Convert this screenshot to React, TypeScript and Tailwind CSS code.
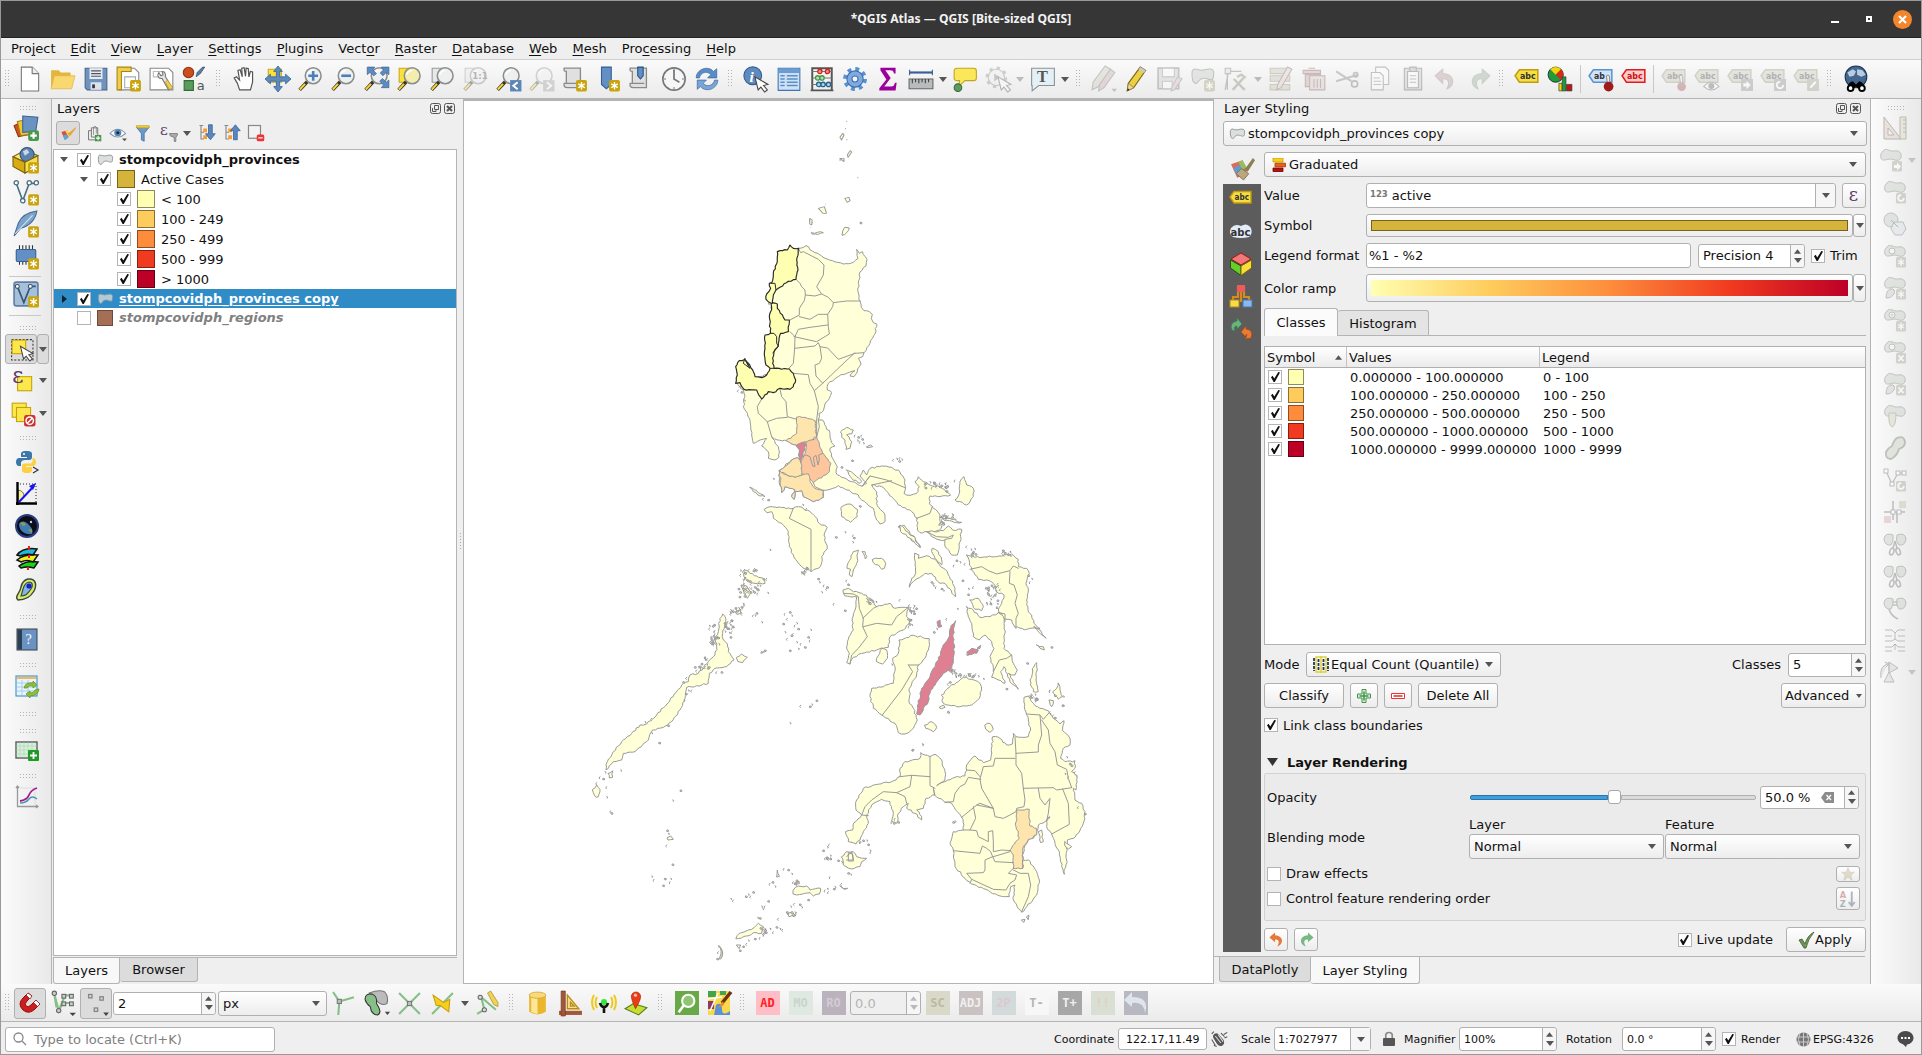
import React from "react";

type P = { children?: React.ReactNode };

const Ic = ({ children, s = 26, o = 1 }: P & { s?: number; o?: number }) => (
  <svg width={s} height={s} viewBox="0 0 24 24" fill="none" opacity={o} className="shrink-0 overflow-visible">
    {children}
  </svg>
);

const Tri = ({ c = "#555" }: { c?: string }) => (
  <svg width="8" height="5" viewBox="0 0 8 5" className="shrink-0"><path d="M0 0H8L4 5Z" fill={c} /></svg>
);
const TriUp = ({ c = "#555" }: { c?: string }) => (
  <svg width="7" height="5" viewBox="0 0 8 5" className="shrink-0"><path d="M0 5H8L4 0Z" fill={c} /></svg>
);

const Grip = () => (
  <svg width="7" height="18" viewBox="0 0 7 18" className="shrink-0">
    {[0, 3, 6, 9, 12, 15].map((y) => (
      <g key={y} fill="#b4b4b4"><rect x="0" y={y} width="1" height="1" /><rect x="3" y={y} width="1" height="1" /></g>
    ))}
  </svg>
);
const HGrip = () => (
  <svg width="17" height="4" viewBox="0 0 17 4" className="shrink-0">
    {[0, 3, 6, 9, 12, 15].map((x) => (
      <g key={x} fill="#b4b4b4"><rect x={x} y="0" width="1" height="1" /><rect x={x} y="3" width="1" height="1" /></g>
    ))}
  </svg>
);

const Check = ({ on = true }: { on?: boolean }) => (
  <span className="flex h-[14px] w-[14px] shrink-0 items-center justify-center border border-[#b4b4b4] bg-white">
    {on && (
      <svg width="11" height="12" viewBox="0 0 11 12"><path d="M1 6.2L2.6 4.8L4.3 7.6L8.3 1L10 1.6L4.8 11H3.6Z" fill="#111" /></svg>
    )}
  </span>
);

const Star = ({ x = 13, y = 13 }) => (
  <g>
    <rect x={x} y={y} width="10" height="10.5" rx="1.5" fill="#c9a40c" />
    <path d={`M${x + 5} ${y + 1.7}V${y + 8.8}M${x + 2} ${y + 3.5}L${x + 8} ${y + 7}M${x + 8} ${y + 3.5}L${x + 2} ${y + 7}`} stroke="#fff" strokeWidth="1.3" />
  </g>
);
const Lens = ({ fill = "#eef0f0" }) => (
  <g>
    <path d="M8.5 14.5L1.5 22" stroke="#3a3320" strokeWidth="3.2" />
    <path d="M6.5 16.5L1.7 21.7" stroke="#f5d73c" strokeWidth="1.8" />
    <circle cx="14" cy="9" r="7.3" fill={fill} stroke="#8b8d8d" strokeWidth="1.4" />
    <path d="M9 8Q10 4.5 14 4" stroke="#fff" strokeWidth="1.3" />
  </g>
);
const BLOB = "M2 5C3 2 5 2.500 8 3.500C12 5 15 2 20 3C23 4 22 8 21.500 11C21 14 18 12.500 15 11.500C11 10.500 9 12 7 15C6 17 3 16 2.500 13C2 11 1.500 8 2 5Z";
const Cursor = ({ x = 10, y = 9 }) => (
  <path transform={`translate(${x} ${y})`} d="M0 0L3 12L5.500 9.500L9 14L11.500 12L8 8L12 7Z" fill="#fff" stroke="#444" strokeWidth="1" />
);
const Scroll = () => (
  <path d="M2 2H17V20H5C2 20 1.500 18 2 16H4V5C2 5 1.500 4 2 2ZM4 16H15" fill="#e0e0e0" stroke="#8a8a8a" strokeWidth="1.2" />
);
const Tag = ({ f, s, t = "abc", c = "#333" }: { f: string; s: string; t?: string; c?: string }) => (
  <g>
    <path d="M1 9L5 3.500H22V15H5Z" fill={f} stroke={s} strokeWidth="1.400" />
    <text x="5.500" y="12" fontSize="8" fontWeight="bold" fill={c} fontFamily="DejaVu Sans, sans-serif" textLength={t === "abc" ? "14.500" : "10"} lengthAdjust="spacingAndGlyphs">{t}</text>
  </g>
);
const PENCIL = "M15 1L20 4L9 20L3 23L4 16Z";

const I = {
  newDoc: <Ic><path d="M4 1H14L20 7V23H4Z" fill="#fff" stroke="#777" /><path d="M14 1V7H20" fill="#eee" stroke="#777" /></Ic>,
  open: <Ic><path d="M1 4H8L10 6H19V20H1Z" fill="#e3b53c" /><path d="M4 9H23L20 21H1Z" fill="#f9d870" stroke="#e0b545" strokeWidth=".7" /></Ic>,
  save: <Ic><path d="M2 2H22V22H4L2 20Z" fill="#6f93bd" stroke="#47668c" /><path d="M6 2H18V12H6Z" fill="#e5eaf0" /><path d="M7.500 4.500H16.500M7.500 7H16.500M7.500 9.500H16.500" stroke="#556" /><path d="M7 15H17V22H7Z" fill="#dde3ea" /><path d="M8.500 17H11V20.500H8.500Z" fill="#334" /></Ic>,
  layoutNew: <Ic><path d="M3 2H17L21 6V22H3Z" fill="#fff" stroke="#888" /><path d="M1 1H14V5H5V22H1Z" fill="#f1cd4d" stroke="#a98516" /><path d="M8 10H18V20H8Z" stroke="#aaa" /><Star x={13} y={13} /></Ic>,
  layoutMgr: <Ic><path d="M1 2H18L22 6V22H1Z" fill="#fff" stroke="#888" /><path d="M4 5H14V10H4Z" stroke="#bbb" /><path d="M9 6C7 9 9 12 12 11.500L18 22L21 20L15 9.500C16 7 14 5 12 5L13 8L11 9Z" fill="#e4e4e4" stroke="#777" /><path d="M15 15L19 22L22 20L17 13Z" fill="#f0cf50" stroke="#a98516" strokeWidth=".6" /></Ic>,
  styles: <Ic><circle cx="6" cy="6" r="4.800" fill="#cc4e1e" stroke="#8f3210" /><path d="M21 1L17 7L13 10L14 6L19 1Z" fill="#557fae" stroke="#345" strokeWidth=".6" /><path d="M2 13.500H10.500V22.500H2Z" fill="#5b9b5e" stroke="#2f6d33" /><text x="13.500" y="22" fontSize="12" fill="#555" fontFamily="DejaVu Sans, sans-serif">a</text></Ic>,
  hand: <Ic><path d="M7 22L5 16L2 11L4 10L7 13L5.500 4L7.500 3.500L9.500 10L9 2L11.200 1.500L12.500 9.500L13 2L15 2.300L15.600 10L17 5L19 5.500L19 15L17 22Z" fill="#fff" stroke="#555" strokeWidth="1.100" /></Ic>,
  pan: <Ic><path d="M3 3H15V15H3Z" fill="#f9e23c" stroke="#c9a820" /><path d="M12 0L16 5H13.500V10H19V7.500L24 12L19 16.500V14H13.500V19H16L12 24L8 19H10.500V14H5V16.500L0 12L5 7.500V10H10.500V5H8Z" fill="#5d8abf" stroke="#355f93" strokeWidth=".7" /></Ic>,
  zin: <Ic><Lens /><path d="M14 4.500V13.500M9.500 9H18.500" stroke="#4d7fb8" strokeWidth="2.400" /></Ic>,
  zout: <Ic><Lens /><path d="M9.500 9H18.500" stroke="#4d7fb8" strokeWidth="2.400" /></Ic>,
  zfull: <Ic><Lens /><path d="M3 1H10L8 3.500L11.500 7L9 9L5.500 6L3 8ZM23 1V8L20.500 6L17.500 9L15 6.500L18 3.500L16 1ZM23 20H16L18 17.500L14.500 14L17 11.500L20.500 15L23 13Z" fill="#5d8abf" stroke="#355f93" strokeWidth=".6" /></Ic>,
  zsel: <Ic><path d="M2 2H12V15H2Z" fill="#f9e23c" stroke="#c9a820" /><Lens fill="#f3eeb0" /></Ic>,
  zlayer: <Ic><path d="M2 2H12V15H2Z" fill="#e8e8e8" stroke="#999" /><Lens /></Ic>,
  z11: <Ic o={0.4}><path d="M2 2H12V15H2Z" fill="#e8e8e8" stroke="#999" /><Lens /><text x="8.500" y="12" fontSize="8" fontWeight="bold" fill="#555" fontFamily="DejaVu Sans, sans-serif">1:1</text></Ic>,
  zlast: <Ic><Lens /><path d="M13 13H23.500V23.500H13Z" fill="#5d86b5" /><path d="M20 15L16 18.300L20 21.500" stroke="#fff" strokeWidth="1.800" /></Ic>,
  znext: <Ic o={0.35}><Lens /><path d="M13 13H23.500V23.500H13Z" fill="#999" /><path d="M16.500 15L20.500 18.300L16.500 21.500" stroke="#fff" strokeWidth="1.800" /></Ic>,
  mapNew: <Ic><Scroll /><Star /></Ic>,
  bmNew: <Ic><path d="M6 1H15V17L10.500 21L6 17Z" fill="#6290c4" stroke="#365f92" /><Star /></Ic>,
  bms: <Ic><Scroll /><path d="M9 1H14V9L11.500 12L9 9Z" fill="#6290c4" stroke="#264f80" /></Ic>,
  clock: <Ic><circle cx="12" cy="12" r="10.300" fill="#f6f6f6" stroke="#777" strokeWidth="1.500" /><path d="M12 4V12L17 15" stroke="#777" strokeWidth="1.600" /><path d="M12 3V4.500M12 19.500V21M3 12H4.500M19.500 12H21" stroke="#368" /></Ic>,
  refresh: <Ic><path d="M2 11C2 3 13 -1 18 5L21 2.500V11H12.500L15.500 8C12 4 6 6 5 11Z" fill="#5a8cc8" stroke="#336199" strokeWidth=".6" /><path d="M22 13C22 21 11 25 6 19L3 21.500V13H11.500L8.500 16C12 20 18 18 19 13Z" fill="#7aa5d6" stroke="#336199" strokeWidth=".6" /></Ic>,
  identify: <Ic><circle cx="9" cy="9" r="8.200" fill="#5d8abf" stroke="#355f93" /><text x="6" y="14.500" fontSize="14" fontStyle="italic" fontWeight="bold" fill="#fff" fontFamily="Liberation Serif, serif">i</text><Cursor x={11} y={10} /></Ic>,
  table: <Ic><path d="M2 2H22V22.500H2Z" fill="#cfe1f5" stroke="#3f76b5" /><path d="M2.500 2.500H21.500V6.500H2.500Z" fill="#6b9dd3" /><path d="M4 9H8M4 12H8M4 15H8M4 18H8M10 9H20M10 12H20M10 15H20M10 18H20" stroke="#5b8fc8" strokeWidth="1.400" /></Ic>,
  abacus: <Ic><path d="M3 22V2H21V22M1.500 22.500H22.500" stroke="#555" strokeWidth="1.800" /><path d="M3 5H21M3 11H21M3 17H21" stroke="#777" /><g strokeWidth="1.200"><circle cx="10" cy="5" r="2" fill="#f88" stroke="#c22" /><circle cx="17" cy="5" r="2" fill="#f88" stroke="#c22" /><circle cx="8" cy="11" r="2" fill="#bdb" stroke="#494" /><circle cx="12" cy="11" r="2" fill="#bdb" stroke="#494" /><circle cx="9" cy="17" r="2" fill="#bce" stroke="#268" /><circle cx="13" cy="17" r="2" fill="#bce" stroke="#268" /><circle cx="18" cy="17" r="2" fill="#bce" stroke="#268" /></g></Ic>,
  gear: <Ic><circle cx="12" cy="12" r="9" stroke="#5a8fd0" strokeWidth="4" strokeDasharray="3.500 3.570" /><circle cx="12" cy="12" r="7.500" fill="#7faadf" stroke="#3d6fb0" /><circle cx="12" cy="12" r="2.800" fill="#f4f4f4" stroke="#3d6fb0" /></Ic>,
  sigma: <Ic><path d="M5 1.500H19V7H17.500C17 4.500 16 4 14 4H9.500L14.500 11L8.500 19H15C17 19 17.500 18 18.500 15.500H20L19 22.500H4V20.500L10.500 12.500L5 4Z" fill="#9b009b" /></Ic>,
  measure: <Ic><path d="M1 6H23" stroke="#3a5f95" strokeWidth="2" /><path d="M1.500 3.500V8.500M22.500 3.500V8.500" stroke="#3a5f95" /><path d="M1 12H23V21H1Z" fill="#b9bcbc" stroke="#666" /><path d="M4 12V16M7 12V15M10 12V16M13 12V15M16 12V16M19 12V15" stroke="#444" /></Ic>,
  tip: <Ic><path d="M5 2H20Q22.500 2 22.500 4.500V11Q22.500 13.500 20 13.500H12L6 19L7 13.500H5Q2 13.500 2 11V4.500Q2 2 5 2Z" fill="#fae85a" stroke="#c3a420" /><circle cx="5.500" cy="20" r="3.500" fill="#5b9b5e" stroke="#386b3a" /></Ic>,
  action: <Ic o={0.35}><circle cx="10.500" cy="10.500" r="8.500" stroke="#888" strokeWidth="3" strokeDasharray="3 3.670" /><circle cx="10.500" cy="10.500" r="7.500" fill="#eee" stroke="#777" /><path d="M8.500 7L14 10.500L8.500 14Z" fill="#777" /><Cursor x={12} y={10} /></Ic>,
  textAnn: <Ic><path d="M1.500 2H22.500V18H8L2 23V18H1.500Z" fill="#e3f0f5" stroke="#8a9296" /><text x="6.500" y="15" fontSize="15" fontWeight="bold" fill="#555" fontFamily="Liberation Serif, serif">T</text></Ic>,
  pencils: <Ic o={0.38}><path d={PENCIL} transform="translate(-2 -1)" fill="#ccb" stroke="#777" /><path d="M18 3L22 6L12 20L7 23L8 17Z" fill="#caa" stroke="#777" /><path d="M19 21H24L21.500 24Z" fill="#777" /></Ic>,
  pencil: <Ic><path d={PENCIL} fill="#edd042" stroke="#7c6a1e" /><path d="M15 1L20 4L18.500 6.500L13.500 3.500Z" fill="#c9c9c9" /><path d="M4 16L9 20L3 23Z" fill="#eed7a0" stroke="#7c6a1e" strokeWidth=".6" /><path d="M3 23L3.500 20.500L5 22Z" fill="#222" /></Ic>,
  saveEd: <Ic o={0.38}><path d="M1 2H20V21H1Z" fill="#ccc" stroke="#777" strokeWidth="1.500" /><path d="M5 2H16V10H5ZM5 14H14V21H5Z" fill="#fff" stroke="#888" /><path d="M19 10L23 12L16 22L13 23L14 19Z" fill="#dbb" stroke="#888" /></Ic>,
  polyNew: <Ic o={0.45}><path d={BLOB} fill="#cdd1cd" stroke="#888" /><rect x="13" y="13" width="10" height="10.500" rx="1.500" fill="#b0af8e" /><path d="M18 14.500V22M15 16.500L21 20M21 16.500L15 20" stroke="#fff" strokeWidth="1.300" /></Ic>,
  vertex: <Ic o={0.38}><path d="M4 5L4 22M5 5H17M5 5L2 22" stroke="#777" strokeWidth="1.200" /><path d="M2 2H7V7H2Z" fill="#ddd" stroke="#777" /><path d="M9 22L19 11M10 12L20 22M13 10L17 8L21 11" stroke="#887" strokeWidth="2.200" /></Ic>,
  multi: <Ic o={0.42}><path d="M2 2H20V7H2ZM2 9H20V14H2ZM2 17H20V22H2Z" fill="#cccbb8" stroke="#998" /><path d="M18 1L22 3L12 20L8 22L9 17Z" fill="#ecc" stroke="#777" /></Ic>,
  trash: <Ic o={0.4}><path d="M2 4H18V7H2ZM7 2H13M4 8H18V19H4Z" fill="#caa" stroke="#866" /><path d="M8 9H22V22H8Z" fill="#dcc" stroke="#866" /><path d="M12 12V20M15 12V20M18 12V20" stroke="#866" /></Ic>,
  cut: <Ic o={0.4}><path d="M2 5L16 14M2 14L22 8" stroke="#888" strokeWidth="2" /><circle cx="19" cy="16.500" r="2.800" stroke="#777" strokeWidth="1.500" /><circle cx="20" cy="8" r="2" stroke="#777" strokeWidth="1.500" /></Ic>,
  copy: <Ic o={0.4}><path d="M8 1H17L20 4V17H8Z" fill="#fff" stroke="#777" /><path d="M4 6H12L15 9V22H4Z" fill="#fff" stroke="#777" /><path d="M6 11H12M6 14H13M6 17H13" stroke="#888" /></Ic>,
  paste: <Ic o={0.45}><path d="M4 2H20V22H4Z" fill="#ccc" stroke="#777" /><path d="M7 5H17V20H7Z" fill="#fff" stroke="#777" /><path d="M9 1H15V5H9Z" fill="#bbb" stroke="#777" /><path d="M9 9H15M9 12H15M9 15H15" stroke="#888" /></Ic>,
  undo: <Ic o={0.38}><path d="M9 3L2 9L9 16V12C14 11 16 15 13 21C20 18 21 8 9 7Z" fill="#b99" stroke="#988" /></Ic>,
  redo: <Ic o={0.38}><path d="M15 3L22 9L15 16V12C10 11 8 15 11 21C4 18 3 8 15 7Z" fill="#9a9" stroke="#898" /></Ic>,
  abcY: <Ic><Tag f="#f5df3f" s="#c29b12" /></Ic>,
  diagram: <Ic><circle cx="8" cy="8" r="7" fill="#1d9b3e" stroke="#222" strokeWidth=".8" /><path d="M8 8L3 3A7 7 0 0 1 13 3Z" fill="#f5d40c" /><path d="M8 8L13 3A7 7 0 0 1 13 13Z" fill="#d82a18" /><path d="M11 16H14V23H11Z" fill="#f5d40c" stroke="#333" strokeWidth=".6" /><path d="M14 10H17.500V23H14Z" fill="#1d9b3e" stroke="#333" strokeWidth=".6" /><path d="M18 17H23V23H18Z" fill="#c01515" stroke="#333" strokeWidth=".6" /></Ic>,
  abB: <Ic><Tag f="#cfe3fa" s="#5b91cf" t="ab" /><path d="M17 9Q20 7 20 12V16L18 17Z" fill="#eee" stroke="#777" strokeWidth=".8" /><circle cx="19" cy="19" r="4.500" fill="#a11a1a" /></Ic>,
  abR: <Ic><Tag f="#fcc" s="#e01b1b" c="#c11" /></Ic>,
  search: <Ic><circle cx="12" cy="10" r="10" fill="#44668f" stroke="#1d3552" /><path d="M4 6L9 3L12 5L10 9L6 10ZM13 3L18 4L21 8L17 10L13 8Z" fill="#b9cde0" /><path d="M4 22Q4 15 9 14L12 17L15 14Q20 15 20 22L14 21L12 19L10 21Z" fill="#000" /><circle cx="7" cy="20.500" r="2.600" fill="#fff" stroke="#000" strokeWidth="1.800" /><circle cx="17.500" cy="20.500" r="2.600" fill="#fff" stroke="#000" strokeWidth="1.800" /></Ic>,
};

const grayTag = (extra: React.ReactNode) => (
  <Ic o={0.42}><Tag f="#cfcfc0" s="#a3a38c" c="#555" />{extra}</Ic>
);
const Slot = ({ children }: P) => <div className="flex w-[33px] shrink-0 items-center justify-center">{children}</div>;
const Gap = ({ w, children }: P & { w: string }) => <div className={`flex shrink-0 items-center justify-center ${w}`}>{children}</div>;
const Sep = () => <span className="h-7 w-px bg-[#c8c8c8]" />;

const TopToolbar = () => (
  <div className="flex h-[39px] shrink-0 items-center border-b border-[#b4b4b4] bg-gradient-to-b from-[#fafafa] to-[#ebebeb] pl-[3px]">
    <Gap w="w-[9px]"><Grip /></Gap>
    {[I.newDoc, I.open, I.save, I.layoutNew, I.layoutMgr, I.styles].map((x, i) => <Slot key={i}>{x}</Slot>)}
    <Gap w="w-[17px]"><Grip /></Gap>
    {[I.hand, I.pan, I.zin, I.zout, I.zfull, I.zsel, I.zlayer, I.z11, I.zlast, I.znext, I.mapNew, I.bmNew, I.bms, I.clock, I.refresh].map((x, i) => <Slot key={i}>{x}</Slot>)}
    <Gap w="w-[16px]"><Grip /></Gap>
    {[I.identify, I.table, I.abacus, I.gear, I.sigma, I.measure].map((x, i) => <Slot key={i}>{x}</Slot>)}
    <Gap w="w-[11px]"><Tri /></Gap>
    <Slot>{I.tip}</Slot><Slot>{I.action}</Slot>
    <Gap w="w-[12px]"><Tri c="#bbb" /></Gap>
    <Slot>{I.textAnn}</Slot>
    <Gap w="w-[12px]"><Tri /></Gap>
    <Gap w="w-[16px]"><Grip /></Gap>
    {[I.pencils, I.pencil, I.saveEd, I.polyNew, I.vertex].map((x, i) => <Slot key={i}>{x}</Slot>)}
    <Gap w="w-[12px]"><Tri c="#bbb" /></Gap>
    {[I.multi, I.trash, I.cut, I.copy, I.paste, I.undo, I.redo].map((x, i) => <Slot key={i}>{x}</Slot>)}
    <Gap w="w-[15px]"><Grip /></Gap>
    <Slot>{I.abcY}</Slot><Slot>{I.diagram}</Slot>
    <Gap w="w-[8px]"><Sep /></Gap>
    <Slot>{I.abB}</Slot><Slot>{I.abR}</Slot>
    <Gap w="w-[7px]"><Sep /></Gap>
    <Slot>{grayTag(<><path d="M17 9Q20 7 20 12V16L18 17Z" fill="#eee" stroke="#777" /><circle cx="19" cy="19" r="4" fill="#a66" /></>)}</Slot>
    <Slot>{grayTag(<><path d="M9 19Q16 11 23 19Q16 25 9 19Z" fill="#fff" stroke="#777" /><circle cx="16" cy="18.500" r="2.800" fill="#777" /></>)}</Slot>
    <Slot>{grayTag(<><path d="M13 12H24V23H13Z" fill="#999" /><path d="M15 16H18V13.500L22 17.500L18 21.500V19H15Z" fill="#fff" /></>)}</Slot>
    <Slot>{grayTag(<><path d="M13 12H24V23H13Z" fill="#999" /><circle cx="18.500" cy="17.500" r="3" stroke="#fff" strokeWidth="1.800" strokeDasharray="14 5" /></>)}</Slot>
    <Slot>{grayTag(<><path d="M13 12H24V23H13Z" fill="#aa9" /><path d="M16 20L21 14.500" stroke="#fff" strokeWidth="2" /></>)}</Slot>
    <Gap w="w-[17px]"><Grip /></Gap>
    <Slot>{I.search}</Slot>
  </div>
);

const Cell = ({ h, children }: P & { h: string }) => <div className={`flex shrink-0 items-center ${h}`}>{children}</div>;
const SQ = ({ x, y, s = 14 }: { x: number; y: number; s?: number }) => <rect x={x} y={y} width={s} height={s} fill="#fce84d" stroke="#c7a109" />;

const LeftToolbar = () => (
  <div className="flex w-[51px] shrink-0 flex-col border-r border-[#b4b4b4] bg-gradient-to-r from-[#fbfbfb] to-[#e9e9e9]">
    <div className="flex flex-col pl-[12px]">
      <Cell h="h-[13px]"><span className="mt-1 ml-[7px]"><HGrip /></span></Cell>
      <Cell h="h-[32px]"><Ic><path d="M1 10L9 6L14 18L5 20Z" fill="#d4501c" stroke="#8d3212" /><path d="M4 6L14 4L16 18L7 19Z" fill="#ecc635" stroke="#9c7c12" /><path d="M9 1L23 2L21 15L9 16Z" fill="#6a93c4" stroke="#41648f" /><rect x="14" y="14" width="10" height="10" rx="2" fill="#4c9650" /><path d="M19 16V22M16 19H22" stroke="#fff" strokeWidth="2" /></Ic></Cell>
      <Cell h="h-[32px]"><Ic><path d="M0 9L11 3L23 8L11 14Z" fill="#fbe97c" stroke="#7a610e" /><circle cx="13" cy="7" r="6.500" fill="#5c83b0" stroke="#324f75" /><path d="M9 4L13 2L15 5L11 8Z" fill="#c8d8e8" /><path d="M0 9L11 14V24L0 18Z" fill="#d8ab14" stroke="#7a610e" /><path d="M11 14L23 8V18L11 24Z" fill="#f7df4d" stroke="#7a610e" /><Star x={14} y={14} /></Ic></Cell>
      <Cell h="h-[32px]"><Ic><path d="M3 4L9 20L15 4H22" stroke="#4a6e80" strokeWidth="1.500" /><g fill="#fff" stroke="#4a6e80" strokeWidth="1.200"><circle cx="3" cy="3.500" r="2" /><circle cx="15" cy="3.500" r="2" /><circle cx="21.500" cy="3.500" r="2" /><circle cx="9" cy="20" r="2" /></g><Star x={14} y={14} /></Ic></Cell>
      <Cell h="h-[32px]"><Ic><path d="M1 23L5 11C8 4 15 1 22 0C21 7 16 14 7 16Z" fill="#7ba3cc" stroke="#456a92" /><path d="M2 21L18 4" stroke="#dbe7f3" /><Star x={14} y={14} /></Ic></Cell>
      <Cell h="h-[32px]"><Ic><path d="M6 2V20M9 2V20M12 2V20M15 2V20M18 2V20" stroke="#333" /><rect x="3" y="6" width="18" height="11" rx="1" fill="#6290c4" stroke="#365f92" /><Star x={14} y={14} /></Ic></Cell>
      <Cell h="h-[8px]"><span className="h-px w-8 bg-[#c8c8c8] -ml-1" /></Cell>
      <Cell h="h-[28px]"><Ic><rect x="1" y="1" width="22" height="22" rx="2" fill="#a6c0dc" stroke="#5f7fa3" strokeWidth="1.500" /><path d="M4 5L10 20L16 5H21" stroke="#36546e" strokeWidth="1.500" /><circle cx="4" cy="5" r="1.800" fill="#fff" stroke="#36546e" /><circle cx="16" cy="5" r="1.800" fill="#fff" stroke="#36546e" /><Star x={14} y={14} /></Ic></Cell>
      <Cell h="h-[14px]"><span className="h-px w-8 bg-[#c8c8c8] -ml-1" /></Cell>
      <Cell h="h-[12px]"><span className="ml-[7px]"><HGrip /></span></Cell>
    </div>
    <div className="flex h-[30px] shrink-0 pl-1">
      <div className="flex w-8 items-center justify-center rounded-[3px] border border-[#b0b0b0] bg-[#dcdcdc]"><Ic s={25}><path d="M2.500 2.500H23V22H2.500Z" stroke="#333" strokeDasharray="2 1.500" /><SQ x={3} y={3} s={13} /><Cursor x={11} y={9} /></Ic></div>
      <div className="flex w-[12px] items-center justify-center rounded-[3px] border border-[#b0b0b0] bg-[#dcdcdc]"><Tri /></div>
    </div>
    <div className="flex h-[33px] shrink-0 items-center pl-[9px]"><Ic><SQ x={7} y={8} s={13} /><text x="2" y="14" fontSize="20" fill="#5b3a6e" fontFamily="DejaVu Serif, serif">ε</text></Ic><span className="ml-[3px]"><Tri /></span></div>
    <div className="flex h-[33px] shrink-0 items-center pl-[9px]"><Ic><SQ x={2} y={2} s={13} /><SQ x={6} y={6} s={13} /><rect x="13" y="13" width="10.500" height="10.500" rx="2" fill="#cf3030" /><circle cx="18.200" cy="18.200" r="3.400" stroke="#fff" strokeWidth="1.400" /><path d="M16 20.500L20.500 16" stroke="#fff" strokeWidth="1.300" /></Ic><span className="ml-[3px]"><Tri /></span></div>
    <div className="flex flex-col pl-[14px]">
      <Cell h="h-[16px]"><span className="ml-[5px]"><HGrip /></span></Cell>
      <Cell h="h-[32px]"><Ic s={24}><path d="M11 1C6 1 6 3 6 5V7H12V8H4C0 8 0 16 4 16H6V13C6 11 8 10 10 10H14C16 10 17 9 17 7V4C17 1 14 1 11 1Z" fill="#3b77a8" /><path d="M12 23C17 23 17 21 17 19V17H11V16H18C22 16 22 8 18 8H17.500V11C17.500 13 16 13.500 14 13.500H10C7 13.500 7 15 7 17V20C7 23 9 23 12 23Z" fill="#fdd043" /><circle cx="9" cy="4" r="1" fill="#fff" /><path d="M18 17L23 20L18 23" stroke="#333" strokeWidth="1.200" /></Ic></Cell>
      <Cell h="h-[32px]"><Ic s={24}><path d="M3 21L3 8Q9 9 9 14Z" fill="#f7f29a" stroke="#222" strokeWidth=".6" /><path d="M2.500 0V23M1 21.500H22" stroke="#000" strokeWidth="2.400" /><path d="M5 2H21V20" stroke="#222" strokeDasharray="1 2" /><path d="M4 20L19 4" stroke="#1616f0" strokeWidth="2" /><path d="M21 1L14 4L18 8Z" fill="#1616f0" /></Ic></Cell>
      <Cell h="h-[32px]"><Ic s={24}><circle cx="12" cy="12" r="11" fill="#0c0d18" stroke="#2a3f80" strokeWidth="2" /><path d="M4 10C6 6 11 7 14 11C18 15 18 18 17 20C10 21 4 17 4 10Z" fill="#417bb5" /><path d="M5 9L9 8L11 11L8 12ZM13 16L17 15L17 19Z" fill="#8f9a52" /><circle cx="16" cy="8" r="1.200" fill="#ccc" /></Ic></Cell>
      <Cell h="h-[32px]"><Ic s={24}><g stroke="#111" strokeWidth="1.500"><path d="M4 20Q12 14 23 16L19 22Q12 20 6 22Z" fill="#17d517" /><path d="M2 14Q9 8 23 9L18 16Q12 13 6 16Z" fill="#f2ef22" /><path d="M2 9Q8 1 22 3L18 9Q12 7 5 10Z" fill="#23b8d8" /></g><path d="M14 0V4M14 9V12M13 21V24" stroke="#f01c1c" strokeWidth="2" /></Ic></Cell>
      <Cell h="h-[32px]"><Ic s={24}><path d="M13 1C21 0 22 7 19 13C15 20 10 22 3 22C-1 18 5 16 6 9C7 4 9 2 13 1Z" fill="#dcec62" stroke="#3b4a3f" strokeWidth="1.500" /><path d="M14 4C18 4 18 8 16 11C12 17 10 18 6 18C8 13 8 5 14 4Z" fill="#83b3ea" stroke="#3b4a3f" strokeWidth="1.200" /><circle cx="14" cy="8" r="2.600" fill="#1523b8" /></Ic></Cell>
      <Cell h="h-[22px]"><span className="ml-[5px]"><HGrip /></span></Cell>
      <Cell h="h-[21px]"><Ic s={24}><rect x="2" y="2" width="20" height="21" fill="#6a93c4" stroke="#3a3f4a" /><path d="M2.500 2.500H7V22.500H2.500Z" fill="#2c3f4f" /><text x="10.500" y="17" fontSize="14" fill="#fff" fontFamily="Liberation Serif, serif">?</text></Ic></Cell>
      <Cell h="h-[32px]"><span className="ml-[5px]"><HGrip /></span></Cell>
      <Cell h="h-[10px]"><Ic s={24}><rect x="1" y="2" width="21" height="20" fill="#eaf3fb" stroke="#4a9ac8" strokeWidth="1.200" /><path d="M2 3H21V5H2Z" fill="#f6b65c" /><path d="M2 9H21M2 13H21M2 17H21M7 6V21M13 6V21" stroke="#a7cfe9" /><path d="M9 14Q10 8 18 9V7L22 11L18 14V12Q14 11 12 14Z" fill="#8cc03c" stroke="#5d8f17" strokeWidth=".7" /><path d="M24 15Q23 22 15 22V24L11 20L15 17V19Q19 19 20 16Z" fill="#8cc03c" stroke="#5d8f17" strokeWidth=".7" /></Ic></Cell>
      <Cell h="h-[46px]"><span className="ml-[5px]"><HGrip /></span></Cell>
      <Cell h="h-[0px]"><span className="-mt-3 ml-[5px]"><HGrip /></span></Cell>
      <Cell h="h-[25px]"><Ic s={24}><path d="M1 4H22V20H1Z" fill="#d7efdc" stroke="#666" strokeWidth="1.500" /><path d="M5 4V20M9 4V20M13 4V20M17 4V20M1 8H22M1 12H22M1 16H22" stroke="#a8d3b2" strokeWidth=".6" /><rect x="13" y="12" width="11" height="11" rx="1" fill="#1f9a24" /><path d="M18.500 14V21M15 17.500H22" stroke="#fff" strokeWidth="1.800" /></Ic></Cell>
      <Cell h="h-[27px]"><span className="ml-[5px]"><HGrip /></span></Cell>
      <Cell h="h-[16px]"><Ic s={24}><path d="M5 3H20V20" stroke="#ddd" /><path d="M2.500 1V21.500H23M1 3L2.500 1L4 3M21 20L23 21.500L21 23" stroke="#999" strokeWidth="1.300" /><path d="M5 16Q12 15 14 10T22 3" stroke="#a8188c" strokeWidth="1.800" /><path d="M5 18Q11 18 14 14T22 14" stroke="#4a9ab0" strokeWidth="1.500" /></Ic></Cell>
    </div>
  </div>
);

const Blob = ({ o = 1 }: { o?: number }) => (
  <svg width="17" height="15" viewBox="0 0 24 18" fill="none" opacity={o} className="shrink-0"><path d={BLOB} fill="#dcdfdf" stroke="#999" strokeWidth="1.400" /></svg>
);

const PanelTitle = ({ t }: { t: string }) => (
  <div className="flex h-[18px] shrink-0 items-center justify-between">
    <span>{t}</span>
    <span className="flex gap-[3px]">
      <svg width="11" height="11" viewBox="0 0 11 11" fill="none" stroke="#555"><rect x=".5" y=".5" width="10" height="10" rx="2" /><path d="M4.500 2.500H8.500V6.500H4.500ZM2.500 5V8.500H6V6.500" /></svg>
      <svg width="11" height="11" viewBox="0 0 11 11" fill="none" stroke="#555"><rect x=".5" y=".5" width="10" height="10" rx="2" /><path d="M3 3L8 8M8 3L3 8" strokeWidth="2" /></svg>
    </span>
  </div>
);

const RAMP: [string, string, string][] = [
  ["< 100", "bg-[#ffffb2]", "border-[#8c8c60]"],
  ["100 - 249", "bg-[#fecc5c]", "border-[#8c7032]"],
  ["250 - 499", "bg-[#fd8d3c]", "border-[#8b4d21]"],
  ["500 - 999", "bg-[#f03b20]", "border-[#842011]"],
  ["> 1000", "bg-[#bd0026]", "border-[#680015]"],
];

const LayersPanel = () => (
  <div className="ml-px flex w-[405px] shrink-0 flex-col">
    <div className="pl-[4px] pr-[3px]"><PanelTitle t="Layers" /></div>
    <div className="mt-[4px] flex h-[24px] items-center pl-[3px]">
      <span className="flex h-6 w-6 items-center justify-center rounded-[3px] border border-[#b0b0b0] bg-[#dcdcdc]"><Ic s={17}><path d="M2 10L8 8L13 16L7 21Z" fill="#de4b3a" /><path d="M4 15L9 13L12 18L7 21Z" fill="#59a7dd" /><path d="M7 8L10 7L15 14L12 17Z" fill="#f3d44d" /><path d="M11 12L15 9L22 3L23 4L17 12L14 16Z" fill="#e8a33f" /></Ic></span>
      <span className="ml-[5px] flex items-center">
        <Ic s={17}><path d="M5 8V21H15M9 4V17H18V4ZM5 8H9" stroke="#777" strokeWidth="1.400" /><path d="M12 14V3Q14 0 16 3V12" stroke="#777" /><rect x="14" y="14" width="9" height="9" fill="#4c9650" /><path d="M18.500 15.500V21.500M15.500 18.500H21.500" stroke="#fff" strokeWidth="1.600" /></Ic>
        <span className="w-[8px]" />
        <Ic s={17}><path d="M0 12Q11 0 22 12Q11 22 0 12Z" fill="#fff" stroke="#8a9aab" strokeWidth="1.500" /><circle cx="11" cy="11" r="5" fill="#5684b8" /><circle cx="11" cy="11" r="2" fill="#123" /><path d="M17 19H24L20.500 23Z" fill="#555" /></Ic>
        <span className="w-[8px]" />
        <Ic s={17}><path d="M2 3H20L13 12V23L9 21V12Z" fill="#6d97c8" stroke="#3e68a0" /><path d="M2 1H20V4H2Z" fill="#f2d844" stroke="#b99c1d" /></Ic>
        <span className="w-[8px]" />
        <Ic s={19}><text x="0" y="14" fontSize="19" fill="#5b3a6e" fontFamily="DejaVu Serif, serif">ε</text><path d="M12 12H22V14L20 17V22H18V17L13 15Z" fill="#aaa" stroke="#777" /></Ic>
        <span className="w-[4px]" />
        <Tri />
        <span className="w-[7px]" />
        <Ic s={18}><path d="M2 2H7M4 2V20H8M4 11H8" stroke="#888" strokeWidth="1.500" /><path d="M7 6H12V11H7ZM7 15H12V20H7Z" fill="#fb9b2b" /><path d="M14 1H19V13H23L16.500 21L10 13H14Z" fill="#5a87be" stroke="#315e94" /></Ic>
        <span className="w-[7px]" />
        <Ic s={18}><path d="M2 2H7M4 2V20H8M4 11H8" stroke="#888" strokeWidth="1.500" /><path d="M7 6H12V11H7ZM7 15H12V20H7Z" fill="#fb9b2b" /><path d="M14 21H19V9H23L16.500 1L10 9H14Z" fill="#5a87be" stroke="#315e94" /></Ic>
        <span className="w-[6px]" />
        <Ic s={18}><rect x="2" y="2" width="16" height="17" stroke="#888" strokeWidth="1.600" fill="#f3f3f3" /><rect x="13" y="14" width="10" height="9" rx="2" fill="#e33" /><path d="M15 18.500H21" stroke="#fff" strokeWidth="1.600" /></Ic>
      </span>
    </div>
    <div className="mt-[4px] flex h-[807px] w-[404px] flex-col border border-[#b4b4b4] bg-white">
      <div className="flex h-[19px] items-center pl-[6px] font-bold"><Tri /><span className="ml-[9px]"><Check /></span><span className="ml-[6px]"><Blob /></span><span className="ml-[5px]">stompcovidph_provinces</span></div>
      <div className="flex h-5 items-center pl-[26px]"><Tri /><span className="ml-[9px]"><Check /></span><span className="ml-[6px] h-[18px] w-[18px] border border-[#74631d] bg-[#d4b43a]" /><span className="ml-[6px]">Active Cases</span></div>
      {RAMP.map(([t, bg, bd]) => (
        <div key={t} className="flex h-5 items-center pl-[63px]"><Check /><span className={`ml-[6px] h-[18px] w-[18px] border ${bg} ${bd}`} /><span className="ml-[6px]">{t}</span></div>
      ))}
      <div className="flex h-[19px] items-center bg-[#308cc6] pl-[8px] font-bold text-white"><svg width="5" height="8" viewBox="0 0 5 8"><path d="M0 0L5 4L0 8Z" fill="#123" /></svg><span className="ml-[10px] text-black"><Check /></span><span className="ml-[6px]"><Blob o={0.75} /></span><span className="ml-[5px] underline underline-offset-2">stompcovidph_provinces copy</span></div>
      <div className="flex h-[19px] items-center pl-[23px] font-bold italic text-[#808080]"><Check on={false} /><span className="ml-[6px] h-4 w-4 border border-[#6c4938] bg-[#a56f56]" /><span className="ml-[6px]">stompcovidph_regions</span></div>
    </div>
    <div className="mt-px flex h-[27px] w-[404px] items-start border-t border-[#b4b4b4]">
      <span className="flex h-[26px] w-[67px] items-center justify-center rounded-b-[3px] border border-t-0 border-[#b4b4b4] bg-[#f8f8f8]">Layers</span>
      <span className="flex h-[24px] w-[78px] items-center justify-center rounded-b-[3px] border border-t-0 border-l-0 border-[#b4b4b4] bg-[#dcdcdc]">Browser</span>
    </div>
  </div>
);

const Y = "#ffffd8";
type Shape = [string, string?];

const noise = (n: number) => {
  const v = Math.sin(n * 12.9898) * 43758.5453;
  return (v - Math.floor(v)) * 2 - 1;
};

// Adds small irregular steps between the vertices of a coastline made of straight segments.
const rough = (d: string, amp: number) => {
  if (/[QHVC]/.test(d)) return d;
  const pts = d.replace("Z", "").split(/[ML]/).filter(Boolean).map((p) => p.trim().split(" ").map(Number));
  const out: string[] = [];
  pts.forEach(([x, y], i) => {
    const [nx, ny] = pts[(i + 1) % pts.length];
    out.push(`${x} ${y}`);
    const len = Math.hypot(nx - x, ny - y);
    const n = Math.min(12, Math.floor(len / 7));
    for (let k = 1; k < n; k++) {
      const t = k / n;
      const o = noise(x * 0.7 + y * 1.3 + k) * amp;
      out.push(`${(x + (nx - x) * t - ((ny - y) / len) * o).toFixed(1)} ${(y + (ny - y) * t + ((nx - x) / len) * o).toFixed(1)}`);
    }
  });
  return `M${out.join("L")}Z`;
};

const G = ({ x, y, shapes, lines, dots }: { x: number; y: number; shapes: Shape[]; lines: string; dots: number[][] }) => (
  <g transform={`translate(${x} ${y}) scale(.33333)`} strokeLinejoin="round" strokeLinecap="round">
    {shapes.map(([d, f], i) => <path key={i} d={rough(d, 2.6)} fill={f ?? Y} stroke="#999" strokeWidth="3" />)}
    <path d={lines} fill="none" stroke="#999" strokeWidth="3" />
    {dots.map(([a, b], i) => <path key={i} d={i % 3 === 0 ? `M${a} ${b}l4 1l-1 4l-4 -1z` : i % 3 === 1 ? `M${a} ${b}l3 1l-1 3` : `M${a} ${b}l-3 4l2 2`} fill={Y} stroke="#999" strokeWidth="3" />)}
  </g>
);

// Scattered islets inside an ellipse.
const cluster = (cx: number, cy: number, rx: number, ry: number, n: number): number[][] =>
  Array.from({ length: n }, (_, i) => [Math.round(cx + noise(cx + i * 3.1) * rx), Math.round(cy + noise(cy + i * 5.7) * ry)]);

const LUZON: Shape[] = [
  ["M295 85L318 77L345 98L365 108L397 122L430 132L452 130L474 115L470 88L478 100L487 95L501 118L498 138L480 156L475 190L474 215L480 243L484 262L492 272L508 275L517 283L514 296L520 308L530 312L526 340L510 370L492 398L488 410L475 415L483 432L478 440L462 470L450 468L465 452L440 460L415 470L385 490L382 510L395 517L388 535L375 552L370 572L357 580L355 600L368 600L378 620L390 640L395 668L405 678L390 685L398 715L412 740L408 758L425 772L455 785L487 798L500 790L490 780L480 768L490 750L500 765L510 745L545 738L575 742L600 755L615 780L617 803L612 820L630 826L650 820L658 800L645 785L655 770L670 785L690 795L720 800L752 825L720 830L690 828L688 852L700 865L720 885L724 925L705 935L660 938L652 930L652 895L635 875L595 855L575 830L545 800L515 795L530 815L530 850L555 885L555 905L540 912L530 900L520 865L500 850L485 840L475 825L440 810L415 797L390 808L368 810L370 832L358 840L340 845L310 830L305 812L285 815L282 838L275 830L285 810L255 800L245 818L238 780L237 752L275 720L293 713L303 730L300 690L290 675L260 662L232 660L215 650L235 680L237 712L225 720L205 715L205 695L185 678L200 655L180 660L160 670L155 645L148 595L130 560L135 530L130 510L110 490L212 460L205 380L215 300L215 215L235 160L265 110Z"],
  ["M290 592L315 592L345 603L350 650L330 662L305 668L290 675L258 662L290 640Z", "#fee5ad"],
  ["M318 668L350 652L365 690L393 730L388 755L340 788L305 760L302 730L315 700Z", "#fec69d"],
  ["M290 675L316 668L315 690L308 705L302 732L294 722L298 695Z", "#de7f92"],
  ["M238 752L275 720L293 713L303 730L305 765L285 772L260 765Z", "#fee5ad"],
  ["M238 752L260 765L285 772L325 762L330 785L345 805L370 812L370 832L358 840L340 845L310 830L305 812L285 815L282 838L275 830L285 810L255 800L245 818Z", "#fee5ad"],
  ["M422 635L440 622L460 630L455 642L440 645L455 665L450 685L438 688L435 660L425 652Z"],
  ["M440 750L465 765L485 785L480 790L455 775Z"],
  ["M780 785L792 770L800 795L820 805L820 830L800 855L765 840L778 820Z"],
  ["M425 860L450 852L472 868L472 890L452 907L425 890Z"],
  ["M193 868L210 860L280 865L295 860L330 875L365 915L382 922L372 945L382 985L365 1010L362 1038L335 1055L305 1040L280 1005L268 980L265 935L245 910L220 895L215 875L202 878Z"],
  ["M595 920L612 915L630 940L645 955L662 982L640 965L620 945Z"],
  ["M335 38L352 37L370 38L355 43L337 42Z"], ["M435 22L448 24L440 38L426 46L428 34Z"], ["M330 0L336 8L333 15Z"],
  ["M150 802L170 812L195 830L180 828L160 815Z"], ["M500 680L512 675L518 680L505 683Z"],
];
const LUZON_LINES = "M295 85L302 98L310 95L355 118L372 135L370 165L350 200L360 215L365 222M290 180L300 190L305 200L315 210L316 225L345 228L365 222L385 232L400 248L398 260L383 283L385 320L388 342L350 365L282 350M316 225L313 242L298 265L298 285L270 300M298 290L330 298L355 283L383 283M400 248L440 243L480 243M270 335L285 350L295 328L330 322L383 315M285 350L284 385L280 430L265 447M284 385L345 378L355 368L360 380L383 384L415 418L465 400L492 398M360 380L365 415L358 430L345 435L348 468L368 490M465 398L420 440L368 490L343 512L355 560L350 600L347 603M265 447L280 460L325 464L330 490L343 512M240 508L245 530L258 545L262 590L290 598M185 537L172 560L175 580L202 605L230 595L262 592M202 605L215 650M305 712L318 705L330 710L338 738L345 740L340 712L348 706L354 735L358 720L356 705L368 700M487 798L510 768L560 780L615 803M510 768L487 798M515 795L575 782M650 895L690 880L697 860M280 865L268 895L333 928L333 1055M340 788L345 800L370 812M350 600L350 652M355 600L358 620L350 650";
const LUZON_DOTS = [[482, 7], [120, 500], [115, 510], [125, 515], [133, 540], [465, 645], [475, 650], [472, 660], [480, 664], [487, 656], [490, 668], [485, 645], [457, 720], [590, 715], [600, 712], [598, 722], [605, 717], [580, 718], [675, 790], [700, 790], [710, 798], [725, 795], [735, 800], [720, 788], [740, 812], [690, 785], [765, 780], [425, 740], [220, 775], [190, 835], [205, 838], [308, 853], [320, 865], [480, 857], [728, 885], [740, 890], [750, 895], [765, 897], [735, 880], [215, 260], [205, 250], ...cluster(705, 795, 38, 9, 16), ...cluster(745, 890, 20, 8, 8)];
const LUZON_HI = "M232 95L240 92L262 90L270 75L280 85L296 85L290 120L294 150L288 178L265 184L235 205L228 210L220 225L217 248L232 252L232 265L255 300L268 300L265 335L242 340L235 378L222 395L218 415L222 445L268 447L280 460L287 480L280 500L270 508L240 505L220 518L205 515L185 537L170 510L132 508L120 488L107 490L112 465L107 440L118 422L135 418L145 430L158 450L165 470L185 473L200 465L210 445L198 435L193 405L195 385L195 345L212 340L208 290L215 262L213 250L198 238L200 222L212 205L208 190L215 188L220 160L232 125Z";
const LUZON_HI_L = "M212 190L225 190L228 210M213 250L220 250M212 340L222 340L230 350L230 370L235 378M218 400L235 378M210 445L222 445M135 414L130 430L150 445L142 428L150 435L136 420L146 440";

const VIS: Shape[] = [
  ["M352 375L363 355L370 335L385 330L380 370L370 390L366 410L358 405L362 388L352 385Z"], ["M428 358L455 355L467 370L463 385L455 388L445 375L430 368Z"], ["M397 335L405 335L411 350L406 357Z"],
  ["M510 256L523 265L540 285L555 292L557 305L570 322L555 310L540 295L512 275Z"], ["M608 325L625 335L635 360L635 375L620 360L605 335Z"],
  ["M555 340L567 345L565 355L590 347L620 362L632 380L652 395L675 445L677 470L645 430L630 430L605 400L585 400L550 425L538 442L545 415L555 405L555 375Z"],
  ["M590 275L640 272L655 258L668 270L695 268L688 320L682 345L665 345L645 320L645 300L630 300L605 290Z"], ["M630 232L660 235L695 247L680 248L650 242Z"],
  ["M340 450L355 445L370 455L395 460L420 475L440 500L480 490L495 505L535 502L530 530L540 545L520 570L480 590L475 622L440 630L395 640L370 652L360 672L350 668L358 640L350 620L352 605L370 570L367 535L378 500L380 470L345 468Z"],
  ["M440 655L455 625L470 630L472 655L458 672L440 665Z"],
  ["M508 600L550 586L598 596L595 630L585 655L565 675L560 705L538 745L538 790L550 805L562 840L550 865L525 882L505 878L495 850L455 825L430 805L420 770L425 745L460 740L490 730L495 680L488 655L505 640Z"],
  ["M665 555L677 542L670 570L673 635L670 660L665 685L640 700L610 740L600 760L595 785L570 825L560 822L565 790L575 745L600 710L610 685L625 660L640 615L655 595Z", "#de7f92"],
  ["M622 545L630 540L635 560L625 562Z", "#de7f92"], ["M712 635L725 625L745 630L740 640L712 646Z", "#de7f92"], ["M742 624L752 616L748 626Z", "#de7f92"], ["M655 690L670 688L665 697Z", "#de7f92"],
  ["M635 765L660 740L685 725L700 712L725 718L750 730L755 750L748 775L725 795L680 800L640 790Z"], ["M628 802L640 795L645 802L635 806Z"],
  ["M585 855L605 845L620 862L610 875L598 868L588 865Z"], ["M765 855L780 850L790 868L780 877L768 868Z"],
  ["M720 480L745 475L760 500L755 512L735 508Z"],
  ["M710 345L735 352L800 350L845 342L865 358L865 380L890 385L898 400L888 430L895 450L890 480L895 515L905 525L912 550L930 565L890 568L855 562L845 540L820 535L805 510L815 490L822 465L800 455L790 430L770 420L745 418L725 390Z"],
  ["M710 500L730 510L750 532L780 530L805 518L820 530L825 580L822 625L845 645L850 670L862 690L855 705L835 700L860 740L865 748L840 725L822 680L812 695L825 730L785 712L790 690L780 650L792 625L785 605L765 585L748 600L730 590L725 550L715 530Z"],
  ["M912 560L930 570L948 595L925 575Z"], ["M920 615L940 620L943 630L930 625Z"],
  ["M912 680L920 668L922 690L918 720L925 755L910 755L900 720Z"], ["M985 730L990 750L998 770L985 778L968 755L980 745Z"], ["M958 780L970 782L965 800Z"],
  ["M38 395L45 390L60 400L80 408L100 415L105 430L75 430L55 425L42 410Z"], ["M35 435L50 438L62 455L52 475L42 460Z"],
];
const VIS_LINES = "M342 460L370 462L385 470L388 505L400 535L398 560L412 590L385 625L365 645L360 672M398 535L430 505L440 500M400 560L440 550L485 555L500 530L535 502M535 675L565 675M535 675L548 695L515 750L457 825M720 388L755 380L775 392L800 402L840 392L850 378L865 385M840 395L838 430L852 435L862 465L855 490L865 520L858 535L858 565M805 518L825 522L825 545M790 695L808 660L830 655L845 645M410 475L420 490L410 485M595 278L620 290L655 292L670 285L665 295L645 298";
const VIS_DOTS = [[318, 290], [345, 275], [370, 285], [372, 292], [368, 305], [350, 420], [355, 432], [120, 328], [312, 490], [345, 510], [215, 395], [225, 400], [265, 415], [268, 425], [282, 435], [292, 440], [275, 455], [290, 445], [20, 515], [30, 508], [5, 515], [5, 540], [10, 560], [5, 575], [2, 590], [40, 490], [70, 525], [80, 518], [95, 545], [165, 520], [180, 515], [185, 525], [172, 535], [160, 550], [200, 548], [195, 555], [205, 565], [165, 575], [172, 595], [185, 585], [200, 605], [213, 610], [225, 620], [205, 625], [190, 580], [235, 590], [242, 568], [240, 600], [180, 630], [95, 635], [103, 632], [240, 798], [245, 792], [212, 796], [260, 780], [180, 848], [510, 478], [605, 425], [610, 435], [618, 440], [635, 445], [640, 450], [612, 430], [612, 575], [620, 565], [672, 375], [680, 360], [690, 365], [705, 370], [698, 420], [715, 445], [730, 440], [715, 462], [682, 505], [710, 318], [895, 405], [905, 415], [900, 425], [965, 620], [760, 715], [655, 730], [660, 725], [748, 620], [720, 630], [655, 815], [578, 912], [548, 928], [892, 668], [1000, 795], [960, 752], [830, 745], [485, 672], [650, 535], [975, 765],
  ...cluster(72, 425, 42, 40, 34), ...cluster(45, 455, 20, 25, 14), ...cluster(545, 505, 16, 16, 14), ...cluster(537, 550, 8, 14, 7), ...cluster(790, 465, 22, 38, 28), ...cluster(730, 337, 10, 12, 9), ...cluster(830, 338, 14, 8, 9), ...cluster(710, 706, 38, 6, 16), ...cluster(912, 770, 14, 10, 12), ...cluster(425, 485, 14, 8, 8), ...cluster(220, 390, 14, 10, 8), ...cluster(640, 240, 14, 12, 9), ...cluster(670, 695, 8, 8, 5)];

const PAL: Shape[] = [
  ["M420 235L428 222L438 238L435 260L428 280L430 300L442 312L445 335L462 360L440 380L405 385L388 400L385 430L350 437L320 442L315 475L300 510L275 545L250 562L218 570L205 600L165 635L130 640L125 660L100 665L78 690L82 665L100 635L130 600L155 580L180 555L200 552L230 525L270 480L305 435L325 425L330 405L355 400L385 365L405 345L410 320L405 300L415 275Z"],
  ["M38 748L50 735L60 748L55 770L48 772L40 758Z"], ["M85 700L98 692L98 712L88 714Z"],
  ["M470 352L485 342L502 352L488 368L475 365Z"], ["M467 215L480 210L482 220L472 223Z"],
  ["M262 893L272 888L280 898L265 900Z"],
  ["M640 1050L655 1038L680 1038L690 1050L722 1045L718 1062L700 1068L690 1058L650 1065L640 1062Z"],
  ["M468 1195L478 1180L505 1170L515 1168L535 1150L550 1160L545 1180L520 1178L500 1188Z"],
  ["M418 1218Q435 1235 424 1255Q415 1262 420 1250Q428 1235 418 1218Z", "#ddddbd"],
  ["M785 950L800 935L820 935L830 950L860 955L845 965L840 980L815 987L790 975Z"],
  ["M590 1010L592 990L598 1008Z"], ["M625 1120L638 1115L648 1127L628 1130Z"], ["M470 1215L482 1215L478 1225Z"],
  ["M780 1038Q790 1050 803 1045L795 1048Z"],
];
const PAL_DOTS = [[302, 750], [278, 780], [92, 812], [95, 818], [80, 770], [80, 740], [238, 607], [122, 690], [60, 710], [70, 715], [75, 695], [50, 728], [262, 870], [265, 880], [260, 915], [278, 972], [215, 1008], [222, 1018], [255, 1015], [272, 1015], [270, 1025], [250, 1035], [452, 1075], [460, 1080], [498, 1068], [505, 1062], [512, 1068], [520, 1055], [545, 1098], [555, 1098], [565, 1082], [548, 1105], [570, 1030], [578, 1025], [585, 1038], [612, 985], [625, 988], [635, 1000], [640, 1025], [650, 1020], [655, 1028], [645, 1028], [685, 1078], [632, 1098], [643, 1090], [660, 1092], [665, 1100], [595, 1135], [540, 1133], [533, 1132], [550, 1168], [555, 1175], [548, 1185], [540, 1192], [525, 1195], [505, 1200], [500, 1210], [490, 1218], [570, 1165], [580, 1175], [590, 1160], [600, 1165], [608, 1168], [480, 1230], [415, 1218], [415, 1235], [412, 1255], [742, 1045], [745, 1055], [762, 1045], [765, 1040], [785, 1030], [805, 998], [812, 1002], [750, 1010], [730, 930], [742, 920], [748, 912], [775, 960], [785, 965], [840, 905], [850, 900], [860, 900], [872, 935], [865, 912], [870, 930], [735, 1050], [455, 240], [450, 215], [460, 210], [485, 200], [490, 195], [375, 350], [365, 370], [355, 380], [350, 390], [345, 380], [360, 385], [320, 412], [310, 425], [325, 450], [335, 450], [318, 460], [312, 480], [545, 335], [555, 330], [525, 225], [410, 395], [425, 395], [195, 545], [215, 535], [265, 555], [215, 578],
  ...cluster(402, 282, 16, 34, 28), ...cluster(448, 265, 14, 22, 16), ...cluster(372, 368, 18, 16, 10), ...cluster(472, 212, 20, 12, 10), ...cluster(745, 950, 10, 7, 8), ...cluster(550, 1172, 10, 10, 8), ...cluster(636, 1122, 16, 7, 8), ...cluster(650, 1025, 12, 8, 6)];

const MIN: Shape[] = [
  ["M78 574L98 570L102 548L125 525L108 510L110 480L130 445L160 435L190 428L215 425L240 410L240 385L255 365L300 355L302 338L315 345L330 350L345 343L365 360L375 395L375 420L350 437L375 425L405 412L435 408L440 375L465 348L490 368L512 360L518 290L540 295L560 315L577 312L580 280L588 290L605 292L625 290L632 270L625 240L613 200L612 172L625 168L640 190L660 205L685 212L700 235L720 252L732 242L728 272L750 295L750 315L730 325L722 355L735 365L765 362L765 385L755 395L772 410L768 450L760 445L765 480L785 490L795 515L790 550L775 580L760 595L742 600L740 660L733 703L725 680L715 630L705 610L695 582L680 560L680 542L690 530L675 545L655 555L650 575L640 595L625 598L612 625L608 660L625 660L650 695L658 720L650 765L605 817L580 780L585 735L572 740L568 770L540 768L455 732L435 715L405 680L400 632L390 610L400 575L430 570L432 555L425 532L395 490L375 487L343 465L340 445L345 465L318 475L310 505L290 510L305 530L305 540L285 520L260 505L265 490L250 500L235 520L230 550L215 545L220 520L210 485L185 478L155 495L140 525L145 550L130 575L120 600L108 612L85 605Z"],
  ["M590 510L628 508L630 558L650 565L650 585L625 598L608 625L608 685L580 685L580 645L570 630L598 595L588 560Z", "#fee5ad"],
  ["M655 575L665 570L670 605L662 608Z"], ["M735 605L748 615L755 620L745 627L735 618Z"], ["M605 840L615 838L612 846Z"], ["M620 830L627 825L625 838Z"],
];
const MIN_LINES = "M330 350V437L345 445M330 410L275 406L270 440L230 458L190 455L155 480L135 500L125 525L145 527M230 458L255 470L260 490M240 410L275 406M440 390L465 392L480 410L482 418L445 412L435 432L420 440L405 460L400 485L375 487M482 410L490 380L520 378L525 355L585 355M585 290L588 340L655 336L655 315L665 285L660 225L620 222M588 340L588 375L605 400L610 445L615 480L612 500L590 505L588 515L570 525L550 535L525 530L520 505L495 500L470 495L480 490L520 505M480 418L485 445L520 505M610 445L700 443L710 450L755 443M665 240L685 270L690 310L705 335L712 375L740 388L745 415L755 443M660 225L670 238L690 215M655 445L660 475L675 495L690 475L685 520L680 542M728 447L745 490L748 553L695 582M470 495L425 532M460 500L467 535L450 570L430 570M450 570L470 572L475 590L495 600L505 605L505 575L518 572L520 605L520 635L545 630L570 632M400 632L480 640L487 618L500 625L512 635L518 650L495 660L495 690L490 698L440 700L455 718L450 730M455 718L520 748L558 750L570 730L585 720L590 705L565 700L580 685M518 650L525 665L580 668M520 650L570 635M580 690L600 700L625 700L632 735L625 770L605 815M608 685L608 660M80 650L95 635L100 660L80 660";
const MIN_DOTS = [[278, 328], [307, 312], [385, 213], [400, 545], [405, 543], [640, 170], [650, 175], [645, 182], [700, 225], [705, 232], [690, 220], [690, 150], [728, 195], [730, 168], [215, 545], [235, 545], [120, 605], [775, 500], [795, 520], [735, 400], [745, 410], [750, 370], [740, 350], [765, 395], [755, 375], [768, 405], [225, 535], [222, 548]];

const MapCanvas = () => (
  <div className="w-[751px] shrink-0 border border-t-2 border-[#b4b4b4] bg-white">
    <svg width="749" height="882" viewBox="464 101 749 882">
      <G x={700} y={220} shapes={LUZON} lines={LUZON_LINES} dots={LUZON_DOTS} />
      <g transform="translate(700 220) scale(.33333)" strokeLinejoin="round"><path d={rough(LUZON_HI, 2)} fill="#ffffb2" stroke="#2a2a2a" strokeWidth="3.500" /><path d={LUZON_HI_L} fill="none" stroke="#2a2a2a" strokeWidth="3" /></g>
      <g transform="translate(640 0) scale(.408 .33333)" fill={Y} stroke="#999" strokeWidth="2.500" strokeLinejoin="round">
        <path d="M490 412L497 400L500 405L494 420ZM490 475L500 475L500 485ZM508 465L515 452L519 456L510 472ZM502 595L512 592L515 602L508 607ZM437 625L452 620L457 640L448 640ZM416 655L422 660L421 675L416 672Z" />
        <path d="M506 364h2M503 386h2M506 419h2M533 533h2M540 667h2M454 613h1M489 480h3M417 682h1" strokeWidth="4" />
      </g>
      <G x={730} y={440} shapes={VIS} lines={VIS_LINES} dots={VIS_DOTS} />
      <G x={580} y={540} shapes={PAL} lines="M805 962V938L818 942L820 962Z" dots={PAL_DOTS} />
      <G x={820} y={640} shapes={MIN} lines={MIN_LINES} dots={MIN_DOTS} />
    </svg>
  </div>
);

const Btn = ({ c = "", children }: P & { c?: string }) => (
  <span className={`flex shrink-0 items-center rounded-[3px] border border-[#b0b0b0] bg-gradient-to-b from-white to-[#ededed] ${c}`}>{children}</span>
);
const Spin = ({ c = "", dim = false, children }: P & { c?: string; dim?: boolean }) => (
  <span className={`flex shrink-0 rounded-[3px] border border-[#b0b0b0] ${dim ? "bg-[#efefef]" : "bg-white"} ${c}`}>
    <span className="flex flex-1 items-center pl-[4px]">{children}</span>
    <span className="flex w-[14px] flex-col items-center justify-center gap-[4px] rounded-r-[3px] border-l border-[#b0b0b0] bg-[#f6f6f6]"><TriUp c={dim ? "#bbb" : "#555"} /><Tri c={dim ? "#bbb" : "#555"} /></span>
  </span>
);
const Lab = ({ children }: P) => <span className="w-[102px] shrink-0">{children}</span>;

const ROWS = [
  ["0.000000 - 100.000000", "0 - 100"],
  ["100.000000 - 250.000000", "100 - 250"],
  ["250.000000 - 500.000000", "250 - 500"],
  ["500.000000 - 1000.000000", "500 - 1000"],
  ["1000.000000 - 9999.000000", "1000 - 9999"],
];

const Undo = ({ c, flip = false }: { c: string; flip?: boolean }) => (
  <Ic s={17}><path transform={flip ? "matrix(-1 0 0 1 24 0)" : undefined} d="M10 2L2 9L10 16V12C15 11 17 15 13 22C22 19 23 7 10 6Z" fill={c} /></Ic>
);

const StylingPanel = () => (
  <div className="flex w-[651px] shrink-0 flex-col">
    <div className="pl-[10px] pr-[4px]"><PanelTitle t="Layer Styling" /></div>
    <Btn c="mt-[4px] ml-[9px] h-[25px] w-[644px] pl-[5px] pr-[8px]"><Blob /><span className="ml-[2px] flex-1">stompcovidph_provinces copy</span><Tri /></Btn>
    <div className="mt-[6px] ml-[9px] flex h-[800px]">
      <div className="flex w-[38px] shrink-0 flex-col">
        <div className="flex h-8 items-center justify-center"><Ic s={25}><path d="M1 8L12 4L17 14L7 21Z" fill="#d96d5a" /><path d="M3 12L11 8L14 14L7 19Z" fill="#5f9bd0" /><path d="M8 6L12 4L16 11L12 13Z" fill="#94bf5a" /><path d="M11 12L18 17L13 23L6 17Z" fill="#b8a77f" stroke="#7b6c48" strokeWidth=".8" /><path d="M14 13L22 2L24 4L17 15Z" fill="#8c7d55" /></Ic></div>
        <div className="flex flex-1 flex-col items-center gap-[8px] bg-[#5c5c5c] pt-[4px] pr-[2px]">
          <Ic s={24}><Tag f="#f5df3f" s="#c29b12" /></Ic>
          <Ic s={24}><path d="M2 8Q6 3 12 6Q18 2 22 8Q24 14 20 17Q12 19 4 17Q-1 14 2 8Z" fill="#e4ecfa" /><text x="1.500" y="15.500" fontSize="10" fontWeight="bold" fill="#333" textLength="20" lengthAdjust="spacingAndGlyphs" fontFamily="DejaVu Sans, sans-serif">abc</text></Ic>
          <Ic s={24}><path d="M12 1L22 7L12 13L2 7Z" fill="#f07878" stroke="#a01818" /><path d="M1.500 8L12 14V23.500L1.500 16Z" fill="#67cf2c" stroke="#25550e" /><path d="M22.500 8L12 14V23.500L22.500 16Z" fill="#f8de3b" stroke="#7a610e" /></Ic>
          <Ic s={24}><path d="M4 19V13H9V4H15V13H20V19M12 6V18" stroke="#d48c20" strokeWidth="2.200" /><rect x="8" y="1" width="8" height="7" fill="#ef5b5b" /><rect x="1" y="16" width="9" height="7" fill="#f8dc45" stroke="#b5861a" /><rect x="14" y="16" width="9" height="7" fill="#8ab9f0" stroke="#4b77ab" /></Ic>
          <Ic s={24}><path d="M13 8L8 2V5Q0 7 3 14L6 15Q4 10 8 10V13Z" fill="#6bb37c" stroke="#3c7f4d" strokeWidth=".7" /><path d="M12 16L17 10V13Q25 14 22 22L16 23Q19 19 17 18V21Z" fill="#ed7a33" stroke="#a84b14" strokeWidth=".7" /></Ic>
        </div>
      </div>
      <div className="ml-[3px] flex w-[602px] shrink-0 flex-col">
        <Btn c="h-[25px] pl-[7px] pr-[8px]"><svg width="14" height="14" viewBox="0 0 14 14"><path d="M1 0H11V4H1Z" fill="#f9cf18" stroke="#c99a0c" strokeWidth=".8" /><path d="M3 5.200H13.500V8.800H3Z" fill="#f2600f" stroke="#9c3a05" strokeWidth=".8" /><path d="M1 10H11V13.500H1Z" fill="#b50f0f" stroke="#700" strokeWidth=".8" /></svg><span className="ml-[3px] flex-1">Graduated</span><Tri /></Btn>
        <div className="mt-[6px] flex h-[25px] items-center">
          <Lab>Value</Lab>
          <span className="flex h-[25px] w-[470px] items-center rounded-[3px] border border-[#b0b0b0] bg-white pl-[3px]"><span className="mb-[3px] text-[8.500px] font-bold text-[#777]">123</span><span className="ml-[4px] flex-1">active</span><span className="flex h-full w-5 items-center justify-center rounded-r-[3px] border-l border-[#b0b0b0] bg-[#f6f6f6]"><Tri /></span></span>
          <Btn c="ml-[6px] h-[25px] w-[24px] justify-center"><Ic s={18}><text x="5" y="19" fontSize="24" fill="#5b3a6e" fontFamily="DejaVu Serif, serif">ε</text></Ic></Btn>
        </div>
        <div className="mt-[6px] flex h-[23px] items-center">
          <Lab>Symbol</Lab>
          <Btn c="h-[23px] w-[487px] px-[4px]"><span className="h-[11px] flex-1 border border-[#74631d] bg-[#d4b43a]" /></Btn><Btn c="h-[23px] w-[13px] justify-center"><Tri /></Btn>
        </div>
        <div className="mt-[6px] flex h-[25px] items-center">
          <Lab>Legend format</Lab>
          <span className="flex h-[25px] w-[325px] items-center rounded-[3px] border border-[#b0b0b0] bg-white pl-[2px]">%1 - %2</span>
          <Spin c="ml-[7px] h-[24px] w-[107px]">Precision 4</Spin>
          <span className="ml-[6px]"><Check /></span><span className="ml-[5px]">Trim</span>
        </div>
        <div className="mt-[6px] flex h-[28px] items-center">
          <Lab>Color ramp</Lab>
          <Btn c="h-[28px] w-[487px] px-[4px]"><span className="h-4 flex-1 bg-[linear-gradient(to_right,#ffffb2,#fecc5c_25%,#fd8d3c_50%,#f03b20_75%,#bd0026)]" /></Btn><Btn c="h-[28px] w-[13px] justify-center"><Tri /></Btn>
        </div>
        <div className="mt-[6px] flex h-[28px] items-end border-b border-[#b4b4b4]">
          <span className="-mb-px flex h-[28px] w-[74px] items-center justify-center rounded-t-[3px] border border-b-0 border-[#b4b4b4] bg-[#fbfbfb]">Classes</span>
          <span className="flex h-[25px] w-[91px] items-center justify-center rounded-t-[3px] border border-b-0 border-l-0 border-[#b4b4b4] bg-[#e4e4e4]">Histogram</span>
        </div>
        <div className="mt-[10px] h-[299px] border border-[#b0b0b0] bg-white">
          <div className="flex h-[21px] items-center border-b border-[#b0b0b0] bg-gradient-to-b from-white to-[#ebebeb]">
            <span className="flex h-full w-[82px] items-center justify-between border-r border-[#c4c4c4] pl-[2px] pr-[4px]">Symbol<TriUp /></span>
            <span className="flex h-full w-[193px] items-center border-r border-[#c4c4c4] pl-[2px]">Values</span><span className="pl-[2px]">Legend</span>
          </div>
          {ROWS.map(([a, b], i) => (
            <div key={a} className="flex h-[18px] items-center pl-[3px]"><Check /><span className={`ml-[6px] h-4 w-4 border ${RAMP[i][1]} ${RAMP[i][2]}`} /><span className="ml-[46px] w-[193px] whitespace-nowrap">{a}</span><span>{b}</span></div>
          ))}
        </div>
        <div className="mt-[7px] flex h-[25px] items-center">
          <span className="w-[42px]">Mode</span>
          <Btn c="h-[25px] w-[195px] pl-[6px] pr-[7px]"><svg width="16" height="17" viewBox="0 0 16 17" fill="none"><path d="M3 1H13V16H3ZM8 0V17" stroke="#e0cf3a" strokeWidth="1.400" /><path d="M1 2V15M5.500 3V15M10.500 3V15M15 2V15" stroke="#235" strokeWidth="1.800" strokeDasharray="3 1" /></svg><span className="ml-[2px] flex-1">Equal Count (Quantile)</span><Tri /></Btn>
          <span className="ml-auto mr-[7px]">Classes</span><Spin c="h-[24px] w-[78px]">5</Spin>
        </div>
        <div className="mt-[6px] flex h-[25px] items-center">
          <Btn c="h-[25px] w-[80px] justify-center">Classify</Btn>
          <Btn c="ml-[6px] h-[25px] w-[28px] justify-center"><svg width="14" height="14" viewBox="0 0 14 14" fill="none"><path d="M5 .5H9V5H13.500V9H9V13.500H5V9H.5V5H5Z" fill="#e0f0e0" stroke="#3f9445" /><path d="M7 2.500V11.500M2.500 7H11.500" stroke="#3f9445" strokeWidth="1.500" /></svg></Btn>
          <Btn c="ml-[6px] h-[25px] w-[28px] justify-center"><svg width="14" height="6" viewBox="0 0 14 6" fill="none"><path d="M.5.5H13.500V5.500H.5Z" fill="#fff" stroke="#e33" /><path d="M2.500 3H11.500" stroke="#e33" strokeWidth="1.600" /></svg></Btn>
          <Btn c="ml-[6px] h-[25px] w-[80px] justify-center">Delete All</Btn>
          <Btn c="ml-auto h-[25px] w-[85px] justify-between pl-[3px] pr-[3px]">Advanced<svg width="6" height="4" viewBox="0 0 6 4"><path d="M0 0H6L3 4Z" fill="#555" /></svg></Btn>
        </div>
        <div className="mt-[10px] flex h-[14px] items-center"><Check /><span className="ml-[5px]">Link class boundaries</span></div>
        <div className="mt-[20px] flex h-[20px] items-center pl-[3px] font-bold"><svg width="11" height="8" viewBox="0 0 11 8"><path d="M0 0H11L5.500 8Z" fill="#333" /></svg><span className="ml-[9px]">Layer Rendering</span></div>
        <div className="mt-[1px] flex h-[148px] flex-col rounded-[2px] border border-[#d2d2d2] bg-[#ebebeb] pl-[2px] pr-[5px]">
          <div className="mt-[11px] flex h-[24px] items-center"><span className="w-[203px]">Opacity</span>
            <span className="flex h-[14px] w-[286px] items-center"><span className="h-[5px] w-[138px] rounded-l-[2px] border border-[#2a74a8] bg-[#3d9ee0]" /><span className="h-[14px] w-[13px] rounded-[3px] border border-[#a8a8a8] bg-white" /><span className="h-[5px] flex-1 rounded-r-[2px] border border-[#b0b0b0] bg-[#dadada]" /></span>
            <Spin c="ml-[4px] h-[23px] w-[99px]"><span className="flex-1">50.0 %</span><svg width="13" height="11" viewBox="0 0 13 11" className="mr-[10px]"><path d="M4 0H13V11H4L0 5.500Z" fill="#8c8c8c" /><path d="M5.500 3L10 8M10 3L5.500 8" stroke="#fff" strokeWidth="1.300" /></svg></Spin>
          </div>
          <div className="mt-[6px] flex h-[43px] items-center">
            <span className="w-[202px] pt-[2px]">Blending mode</span>
            <div className="w-[195px]"><div className="h-[19px] leading-[19px]">Layer</div><Btn c="h-[25px] w-[195px] pl-[4px] pr-[7px]"><span className="flex-1">Normal</span><Tri /></Btn></div>
            <div className="ml-px w-[195px]"><div className="h-[19px] leading-[19px]">Feature</div><Btn c="h-[25px] w-[195px] pl-[4px] pr-[7px]"><span className="flex-1">Normal</span><Tri /></Btn></div>
          </div>
          <div className="mt-[7px] flex h-[17px] items-center"><Check on={false} /><span className="ml-[5px] flex-1">Draw effects</span><Btn c="h-[16px] w-[24px] justify-center"><Ic s={14} o={0.45}><path d="M12 1L15 9H23L17 14L19 23L12 17L5 23L7 14L1 9H9Z" fill="#c8b98a" stroke="#998" /></Ic></Btn></div>
          <div className="mt-[5px] flex h-[23px] items-center"><Check on={false} /><span className="ml-[5px] flex-1">Control feature rendering order</span><Btn c="h-[23px] w-[24px] justify-center"><Ic s={18} o={0.45}><text x="1" y="11" fontSize="11" fontWeight="bold" fill="#a55" fontFamily="DejaVu Sans, sans-serif">A</text><text x="1" y="22" fontSize="11" fontWeight="bold" fill="#567" fontFamily="DejaVu Sans, sans-serif">Z</text><path d="M17 2V20M13 16L17 21L21 16" stroke="#567" strokeWidth="2.500" /></Ic></Btn></div>
        </div>
        <div className="mt-[6px] flex h-[25px] items-center">
          <Btn c="h-[23px] w-[24px] justify-center"><Undo c="#e8783a" /></Btn><Btn c="ml-[6px] h-[23px] w-[24px] justify-center"><Undo c="#78b883" flip /></Btn>
          <span className="ml-auto"><Check /></span><span className="ml-[5px]">Live update</span>
          <Btn c="ml-[13px] h-[25px] w-[80px] pl-[11px]"><svg width="17" height="18" viewBox="0 0 17 18"><path d="M1 9L4 8L7 13Q9 5 16 1Q10 8 8 17H6Z" fill="#6f9457" stroke="#3d5b2b" strokeWidth=".8" /></svg>Apply</Btn>
        </div>
      </div>
    </div>
    <div className="mt-[4px] flex h-[28px] items-start border-t border-[#b4b4b4] pl-[5px]">
      <span className="flex h-[25px] w-[92px] items-center justify-center rounded-b-[3px] border border-t-0 border-[#b4b4b4] bg-[#dcdcdc]">DataPlotly</span>
      <span className="flex h-[27px] w-[109px] items-center justify-center rounded-b-[3px] border border-t-0 border-l-0 border-[#b4b4b4] bg-[#f8f8f8]">Layer Styling</span>
    </div>
  </div>
);

const Badge = ({ t }: { t: string }) => (
  <g><rect x="13" y="13" width="10" height="10.500" rx="1.500" fill="#b4b4a8" />
    {t === "x" ? <path d="M15.500 15.500L20.500 21M20.500 15.500L15.500 21" stroke="#fff" strokeWidth="1.800" /> : t === ">" ? <path d="M15 17H18V14.500L22 18.500L18 22.500V20H15Z" fill="#fff" /> : t === "o" ? <circle cx="18" cy="18" r="2.800" stroke="#fff" strokeWidth="1.700" strokeDasharray="13 5" /> : <path d="M18 14.500V22M15 16.500L21 20M21 16.500L15 20" stroke="#fff" strokeWidth="1.300" />}
  </g>
);
const SMALL = "M4 3C7 -1 11 4 15 3C20 2 23 5 22 9C21 14 16 12 12 11C8 11 3 14 2 10C1 7 2 5 4 3Z";
const base = <path d={SMALL} fill="#ced3ce" stroke="#8d928d" />;
const hole = <circle cx="9" cy="7" r="3" fill="#f4f4f4" stroke="#8d928d" />;
const leg = <path d="M7 13Q13 12 11 18Q8 23 3 22Q3 15 7 13Z" fill="#ced3ce" stroke="#8d928d" />;
const split = <><path d="M10 3Q2 0 1 7Q2 14 8 13Q11 9 10 3ZM14 3Q22 0 23 7Q22 14 16 13Q12 9 14 3Z" fill="#ced3ce" stroke="#8d928d" /><path d="M12 9L10 16M12 9L14 16" stroke="#888" strokeWidth="1.500" /><ellipse cx="9" cy="19.500" rx="2" ry="3.500" stroke="#888" strokeWidth="1.500" transform="rotate(20 9 19)" /><ellipse cx="15" cy="19.500" rx="2" ry="3.500" stroke="#888" strokeWidth="1.500" transform="rotate(-20 15 19)" /></>;
const RIGHT_ICONS: React.ReactNode[] = [
  <><path d="M1 1V23H18ZM5 12V19H11Z" fill="#ddd0c4" stroke="#877" fillRule="evenodd" /><path d="M17 1H23V23H17Z" fill="#deddc8" stroke="#887" /><path d="M20 4H23M20 8H23M20 12H23M20 16H23" stroke="#887" /></>,
  <>{base}<Badge t=">" /></>, <>{base}<Badge t="o" /></>,
  <><circle cx="8" cy="8" r="7" fill="#ced3ce" stroke="#8d928d" /><path d="M11 10H20L23 17L19 23H12L8 17Z" fill="#dde3e6" stroke="#8d928d" /><path d="M8 8L15 15" stroke="#777" /></>,
  <>{base}{hole}<Badge t="*" /></>, <>{base}{leg}<Badge t="*" /></>, <>{base}{hole}<circle cx="9" cy="7" r="1.500" fill="#bbb" /><Badge t="*" /></>,
  <>{base}{hole}<Badge t="x" /></>, <>{base}{leg}<Badge t="x" /></>,
  <>{base}<path d="M6 9H13Q13 22 9 23Q5 20 6 9Z" fill="#d8d8c4" stroke="#998" /></>,
  <path d="M14 2Q21 -1 22 6Q22 11 16 13Q14 20 8 23Q2 23 3 16Q5 12 9 10Q11 4 14 2Z" fill="#d0d4c8" stroke="#898d82" strokeWidth="1.800" />,
  <><path d="M3 3L9 16L15 5H21" stroke="#888" strokeWidth="1.200" /><g fill="#fff" stroke="#888"><rect x="1" y="1" width="4" height="4" /><rect x="7" y="14" width="4" height="4" /><rect x="13" y="3" width="4" height="4" /><rect x="19" y="3" width="4" height="4" /></g><Badge t="o" /></>,
  <><path d="M10 1V14M14 12V23M1 12H22M10 14V20" stroke="#888" strokeWidth="1.500" /><rect x="16" y="1" width="7" height="7" fill="#c9c8b0" /><rect x="1" y="16" width="7" height="7" fill="#d8b8b8" /><g fill="#fff" stroke="#888"><rect x="8" y="10" width="4" height="4" /><rect x="14" y="10" width="4" height="4" /></g></>,
  split, split,
  <><path d="M10 3Q2 0 1 7Q2 14 8 13Q11 9 10 3ZM14 3Q22 0 23 7Q22 14 16 13Q12 9 14 3Z" fill="#ced3ce" stroke="#8d928d" /><path d="M9 6H15M9 9H15" stroke="#999" strokeWidth="1.500" /><path d="M6 13Q8 20 15 23" stroke="#888" strokeWidth="1.500" /></>,
  <path d="M2 2H9L12 5L15 2H22M2 8H9M15 8H22M12 5V11M2 13H9L12 11L15 13H22M2 19H9L12 16L15 19H22M12 16V22M2 23H9M15 23H22" stroke="#888" />,
  <><path d="M9 4Q0 6 2 18M6 2L10 4L7 7M10 2V11M10 2L19 8L10 13ZM10 12L5 22H15Z" fill="#d8d8d8" stroke="#888" /></>,
];

const RightToolbar = () => (
  <div className="ml-px flex w-[51px] shrink-0 flex-col border-l border-[#b4b4b4] bg-gradient-to-r from-[#fbfbfb] to-[#e9e9e9]">
    <div className="flex h-[13px] items-center pt-1 pl-[17px]"><HGrip /></div>
    {RIGHT_ICONS.map((x, i) => (
      <div key={i} className={`flex h-[32px] items-center ${i === 1 || i === 17 ? "pl-[8px]" : "pl-[12px]"}`}><Ic s={24} o={0.5}>{x}</Ic>{(i === 1 || i === 17) && <span className="ml-[5px]"><Tri c="#c4c4c4" /></span>}</div>
    ))}
  </div>
);

const Sq = ({ c, children }: P & { c: string }) => (
  <Slot><span className={`flex h-6 w-6 items-center justify-center font-['DejaVu_Sans_Mono',monospace] text-[12px] font-bold ${c}`}>{children}</span></Slot>
);
const GR = "#86bf88";

const BottomToolbar = () => (
  <div className="flex h-[38px] shrink-0 items-center border-b border-[#b4b4b4] bg-gradient-to-b from-[#fafafa] to-[#ebebeb] pt-px pl-[3px]">
    <Gap w="w-[9px]"><Grip /></Gap>
    <span className="ml-px flex h-[31px] w-[32px] items-center justify-center rounded-[3px] border border-[#b0b0b0] bg-[#dcdcdc]"><Ic s={24}><path d="M10 3L5 8Q-1 14 5 20Q11 25 17 19L22 14L18 10L13 15Q10 18 8 16Q6 14 9 11L14 6Z" fill="#cf1d1d" stroke="#8d1010" transform="translate(0 -1)" /><path d="M10 2L14 5L12 8L8 4ZM18 9L22 13L19.500 15.500L15.500 11.500Z" fill="#fff" stroke="#8d1010" strokeWidth=".7" /></Ic></span>
    <Gap w="w-[34px]"><Ic><path d="M4 4L8 19L13 7M8 19L12 12H20M13 5L20 5M4 4L6 16" stroke={GR} strokeWidth="2" /><g fill="#ccc" stroke="#666"><circle cx="4" cy="3" r="2" /><rect x="11" y="4" width="3.500" height="3.500" /><rect x="18" y="4" width="3.500" height="3.500" /><rect x="11" y="11" width="3.500" height="3.500" /><rect x="18" y="11" width="3.500" height="3.500" /><circle cx="8" cy="19" r="2" /></g><path d="M18 21H24L21 24Z" fill="#444" /></Ic></Gap>
    <span className="flex h-[31px] w-[32px] items-center justify-center rounded-[3px] border border-[#b0b0b0] bg-[#dcdcdc]"><Ic s={27}><g fill="#ddd" stroke="#888" strokeWidth="1.200"><rect x="5" y="4" width="3" height="3" /><rect x="15" y="6" width="3" height="3" /><rect x="10" y="16" width="3" height="3" /></g><path d="M18 20H23L20.500 23Z" fill="#444" /></Ic></span>
    <Spin c="ml-[1px] h-[23px] w-[103px]">2</Spin>
    <Btn c="ml-[2px] h-[25px] w-[109px] pl-[4px] pr-[6px]"><span className="flex-1">px</span><Tri /></Btn>
    <Slot><Ic s={25}><path d="M2 1L8 10L22 6M8 10L7 23" stroke={GR} strokeWidth="2" /><rect x="6" y="8" width="4" height="4" fill="#bbb" stroke="#777" /></Ic></Slot>
    <Slot><Ic s={25}><path d="M5 2Q15 -2 20 1Q24 6 22 12Q17 15 12 9Z" fill="#bbb" stroke="#777" /><path d="M1 8Q1 2 8 3Q13 5 12 12Q18 21 13 23Q7 23 6 15Q2 12 1 8Z" fill={GR} stroke="#333" /><path d="M20 20H25L22.500 23Z" fill="#444" /></Ic></Slot>
    <Slot><Ic s={25}><path d="M2 2L22 22M22 2L2 22" stroke={GR} strokeWidth="2" /><rect x="10" y="10" width="4" height="4" fill="#bbb" stroke="#777" /></Ic></Slot>
    <Slot><Ic s={25}><path d="M2 22L22 2" stroke={GR} strokeWidth="2" /><path d="M3 4L13 11L19 8L18 20L10 14L6 14Z" fill="#f6cf1a" stroke="#c99a10" /></Ic></Slot>
    <Gap w="w-[12px]"><Tri /></Gap>
    <Slot><Ic s={25}><path d="M2 22L9 18L6 6L20 18" stroke={GR} strokeWidth="2" /><circle cx="5" cy="6" r="2" fill="#ddd" stroke="#666" /><circle cx="9" cy="18" r="2" fill="#ddd" stroke="#666" /><path d="M12 2L15 0L22 11V15L18 13Z" fill="#f2d256" stroke="#a88b25" strokeWidth=".7" /></Ic></Slot>
    <Gap w="w-[17px]"><Grip /></Gap>
    <Slot><Ic s={25}><path d="M4 4V20Q12 25 20 20V4Q12 -1 4 4Z" fill="#ecb62c" /><path d="M6 5V20Q9 22 12 22V6Z" fill="#fbe79a" /><ellipse cx="12" cy="4" rx="8" ry="3" fill="#f8da7c" stroke="#cc951a" strokeWidth=".6" /></Ic></Slot>
    <Slot><Ic s={25}><path d="M1 19H23V23H1Z" fill="#a2573a" /><path d="M3 0H7V24H3Z" fill="#a2573a" stroke="#6e3520" strokeWidth=".6" /><path d="M9 4V17H20ZM12 11V14.500H15.500Z" fill="#f3e191" stroke="#ba8b10" strokeWidth="1.300" fillRule="evenodd" /></Ic></Slot>
    <Slot><Ic s={24}><circle cx="12" cy="11" r="3" fill="#35e63a" /><path d="M8 12Q9 16 12 16Q15 16 16 12M12 16V22" stroke="#111" strokeWidth="2.600" /><path d="M5 6Q2 11 5 17M2 4Q-2 11 2 19M19 6Q22 11 19 17M22 4Q26 11 22 19" stroke="#eec81c" strokeWidth="2" /></Ic></Slot>
    <Slot><Ic s={25}><path d="M1 17L9 12L22 16L14 23Z" fill="#c9dc31" stroke="#4d7e1c" /><path d="M11 17Q7 8 7 5Q8 1 11.500 1Q15 1 16 5Q16 9 11 17Z" fill="#ea3c16" stroke="#a3230a" strokeWidth=".6" /><circle cx="11" cy="4" r="1.500" fill="#fbb" /></Ic></Slot>
    <Gap w="w-[17px]"><Grip /></Gap>
    <Slot><span className="flex h-6 w-6 items-center justify-center bg-[#69a847]"><Ic s={21}><circle cx="14" cy="9" r="7" stroke="#fff" strokeWidth="2.400" fill="#8fc472" /><path d="M9 14L3 22" stroke="#fff" strokeWidth="3" /></Ic></span></Slot>
    <Slot><Ic s={24}><rect x="0" y="0" width="22" height="24" fill="#f9d94b" /><path d="M0 0H8V6H0ZM12 0H18V4H12Z" fill="#43a54a" /><path d="M0 10H6V18H0Z" fill="#8a3b63" /><path d="M8 14Q14 10 14 18T22 20V24H6Z" fill="#5b90d8" /><path d="M2 20L10 2M0 8L14 6" stroke="#fff" strokeWidth="1.500" /><path d="M23 1L14 12" stroke="#6b2f12" strokeWidth="3.500" /><path d="M15 10L10 17L16 14Z" fill="#e88b2c" /></Ic></Slot>
    <Gap w="w-[15px]"><Grip /></Gap>
    <Sq c="bg-[#ffbdc8] text-[#f22]">AD</Sq><Sq c="bg-[#e0e8e2] text-[#c8d6ca]">MO</Sq><Sq c="bg-[#bab2bd] text-[#d3cbd5]">RO</Sq>
    <Spin dim c="h-[24px] w-[71px]"><span className="text-[#b4b4b4]">0.0</span></Spin>
    <Sq c="bg-[#d8d9c8] text-[#b9ba9f]">SC</Sq><Sq c="bg-[#cac2c2] text-[#f2eeee]">ADJ</Sq><Sq c="bg-[#d3dada] text-[#dcc8d0]">2P</Sq><Sq c="bg-[#f7f7f7] text-[#b4b4b4]">T-</Sq><Sq c="bg-[#a7a7a7] text-[#f0f0f0]">T+</Sq><Sq c="bg-[#d9dfd2] text-[#e2cfc4]">!!</Sq>
    <Slot><span className="flex h-6 w-6 bg-[#b7b8c2]"><Ic s={24}><path d="M8 1L0 9L8 16V12Q20 10 21 22Q26 6 8 6Z" fill="#dfe4ee" /></Ic></span></Slot>
  </div>
);

const StatusBar = () => (
  <div className="flex h-[32px] shrink-0 items-center bg-[#efefef] pt-[2px] pl-1 text-[11px]">
    <span className="flex h-[25px] w-[270px] items-center rounded-[3px] border border-[#b0b0b0] bg-white pl-[7px] text-[13px] text-[#808080]"><svg width="14" height="14" viewBox="0 0 14 14" fill="none" stroke="#888" strokeWidth="1.300"><circle cx="5.500" cy="5.500" r="4.500" /><path d="M9 9L13 13" /></svg><span className="ml-[7px]">Type to locate (Ctrl+K)</span></span>
    <span className="ml-[779px] w-[64px]">Coordinate</span>
    <span className="flex h-[22px] w-[89px] items-center rounded-[3px] border border-[#b0b0b0] bg-white pl-[7px]">122.17,11.49</span>
    <span className="ml-[4px] flex w-[30px]"><Ic s={17}><path d="M5 4Q9 2 12 6L18 13Q20 19 15 21Q10 22 7 16L3 9Q2 6 5 4Z" fill="#555" /><path d="M6 7L14 17M10 5L17 15" stroke="#ddd" strokeWidth="1.500" /><path d="M14 3L19 8M1 12L6 20M1 4L4 1M18 5L23 2M19 10L23 8M4 20L8 22" stroke="#555" strokeWidth="1.500" /></Ic></span>
    <span className="w-[33px]">Scale</span>
    <span className="flex h-[24px] w-[97px] items-center rounded-[3px] border border-[#b0b0b0] bg-white pl-[3px]"><span className="flex-1">1:7027977</span><span className="flex h-full w-5 items-center justify-center border-l border-[#b0b0b0] bg-[#f6f6f6]"><Tri /></span></span>
    <svg width="12" height="16" viewBox="0 0 13 16" fill="none" className="ml-[12px] mr-[9px]"><path d="M3 8V4Q3 1 6.500 1T10 4V8" stroke="#8a8a8a" strokeWidth="1.800" /><rect x="0" y="7" width="13" height="8.500" rx="1" fill="#555" /></svg>
    <span className="w-[55px]">Magnifier</span><Spin c="h-[24px] w-[98px]">100%</Spin>
    <span className="ml-[9px] w-[56px]">Rotation</span><Spin c="h-[24px] w-[94px]">0.0 °</Spin>
    <span className="ml-[6px]"><Check /></span><span className="ml-[5px] w-[56px]">Render</span>
    <svg width="15" height="15" viewBox="0 0 15 15" fill="none" className="-ml-px"><circle cx="7.500" cy="7.500" r="7" fill="#777" /><path d="M1 5H14M1 10H14M7.500 0V15M4 1Q1 7.500 4 14M11 1Q14 7.500 11 14" stroke="#ccc" /></svg>
    <span className="ml-[2px] w-[84px]">EPSG:4326</span>
    <svg width="17" height="16" viewBox="0 0 17 16"><path d="M8.500 0C13 0 16.500 3 16.500 6.800S13 13.500 10 13.500L9 16L6 13.200C3 12.500.5 10 .5 6.800C.5 3 4 0 8.500 0Z" fill="#4a4a4a" /><path d="M4 6H6V8H4ZM7.500 6H9.500V8H7.500ZM11 6H13V8H11Z" fill="#fff" /></svg>
  </div>
);

const MENU: [string, string, string][] = [
  ["Pro", "j", "ect"], ["", "E", "dit"], ["", "V", "iew"], ["", "L", "ayer"], ["", "S", "ettings"], ["", "P", "lugins"], ["Vect", "o", "r"], ["", "R", "aster"],
  ["", "D", "atabase"], ["", "W", "eb"], ["", "M", "esh"], ["Pro", "c", "essing"], ["", "H", "elp"],
];

export default function App() {
  return (
    <div className="flex h-[1055px] w-[1922px] flex-col overflow-hidden border border-[#999] bg-[#efefef] font-['DejaVu_Sans',sans-serif] text-[13px] leading-none whitespace-nowrap text-[#111]">
      <div className="flex h-[37px] shrink-0 items-center border-b border-[#222] bg-[#363636]">
        <span className="w-[110px]" />
        <span className="flex-1 text-center font-['Noto_Sans',sans-serif] text-[12.100px] font-bold text-[#f2f2f2]">*QGIS Atlas — QGIS [Bite-sized QGIS]</span>
        <span className="flex w-[110px] items-center justify-end pr-[9px]"><span className="mt-[6px] h-[2px] w-[8px] bg-white" /><span className="ml-[27px] h-[6px] w-[6px] border-2 border-white" /><span className="ml-[21px] flex h-[19px] w-[19px] items-center justify-center rounded-full bg-[#f3852b]"><svg width="9" height="9" viewBox="0 0 9 9"><path d="M1 1L8 8M8 1L1 8" stroke="#fff" strokeWidth="2.200" /></svg></span></span>
      </div>
      <div className="flex h-[22px] shrink-0 items-center gap-[15.100px] border-b border-[#d0d0d0] pl-[10px]">
        {MENU.map(([a, b, c]) => <span key={a + b + c}>{a}<u className="underline-offset-2">{b}</u>{c}</span>)}
      </div>
      <TopToolbar />
      <div className="flex h-[885px] shrink-0">
        <LeftToolbar />
        <LayersPanel />
        <div className="flex w-[5px] shrink-0 items-center justify-center"><svg width="1" height="17" viewBox="0 0 1 17"><path d="M.5 0V17" stroke="#aaa" strokeDasharray="1 2" /></svg></div>
        <MapCanvas />
        <StylingPanel />
        <div className="w-[4px] shrink-0" />
        <RightToolbar />
      </div>
      <BottomToolbar />
      <StatusBar />
    </div>
  );
}
